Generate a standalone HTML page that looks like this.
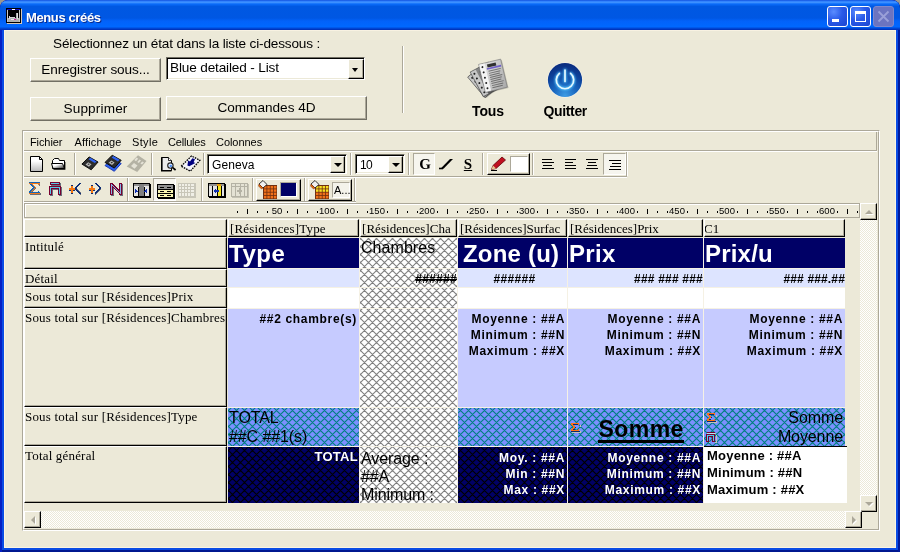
<!DOCTYPE html>
<html>
<head>
<meta charset="utf-8">
<title>Menus créés</title>
<style>
*{box-sizing:border-box;margin:0;padding:0}
html,body{width:900px;height:552px;overflow:hidden;background:#9a9890}
body{font-family:"Liberation Sans",sans-serif;font-size:13px;color:#000;position:relative}
.a{position:absolute}
#win{position:absolute;left:0;top:0;width:900px;height:552px;background:#0a4ce4;overflow:hidden;border-radius:8px 8px 0 0;box-shadow:inset 2px 0 0 #0420c4,inset -2px 0 0 #001a9c,inset 0 -2px 0 #001890}
#title{position:absolute;left:0;top:0;width:900px;height:30px;
 background:linear-gradient(to bottom,#0a46d6 0px,#2f7efc 1px,#3c90ff 2.5px,#0a6cfa 4px,#0058e2 6.5px,#0057e3 18px,#0262fa 21px,#0068ff 26.5px,#0052e2 28px,#0038c4 29px,#0030b6 30px);
 border-radius:8px 8px 0 0}
#title .cap{position:absolute;left:26px;top:10px;line-height:15px;font-size:13px;font-weight:bold;color:#fff;text-shadow:1px 1px 0 #0a2a8c;letter-spacing:-0.38px;white-space:nowrap}
#client{position:absolute;left:4px;top:30px;width:892px;height:518px;background:#ece9d8;box-shadow:inset 1px 0 0 #fbf4e2,inset -1px 0 0 #fbf4e2,inset 0 -1px 0 #fbf4e2,inset 0 1px 0 #f8f2e2}
#pg{position:absolute;left:0;top:0;width:900px;height:552px;will-change:transform}
#title{will-change:transform}
.btn{position:absolute;background:#ece9d8;border:1px solid;border-color:#fff #716f64 #716f64 #fff;box-shadow:inset -1px -1px 0 #aca899;text-align:center;font-size:13px;white-space:nowrap}
.tb{position:absolute;width:21px;height:21px;border-radius:3px;border:1px solid #fff}
.t{position:absolute;white-space:nowrap}
.ser{font-family:"Liberation Serif",serif}
.mn{font-size:11px;line-height:13px;top:136px}
.rh{position:absolute;left:24px;width:203px;border-right:1px solid #000;border-bottom:1px solid #000;border-top:1px solid #fff;border-left:1px solid #fff;background:#ece9d8;box-shadow:inset -1px -1px 0 #aca899}
.rh span{position:absolute;left:0px;top:2px;font-family:"Liberation Serif",serif;font-size:13px;line-height:14px;letter-spacing:0.18px;white-space:nowrap}
.ch{position:absolute;top:219px;height:18px;border-right:1px solid #000;border-bottom:1px solid #000;border-top:1px solid #fff;border-left:1px solid #fff;background:#ece9d8;box-shadow:inset -1px -1px 0 #aca899;overflow:hidden}
.ch span{position:absolute;left:1px;top:2px;font-family:"Liberation Serif",serif;font-size:13px;line-height:14px;letter-spacing:0.18px;white-space:nowrap}
.c{position:absolute;overflow:hidden}
.b12{font-size:12px;font-weight:bold;line-height:16px;letter-spacing:0.55px;white-space:nowrap}
</style>
</head>
<body>
<div id="win">
<div id="title">
<svg class="a" style="left:6px;top:8px" width="16" height="16" viewBox="0 0 16 16" shape-rendering="crispEdges">
<rect x="0" y="0" width="15" height="15" fill="#000"/>
<rect x="15" y="1" width="1" height="15" fill="#d8c8b8"/><rect x="1" y="15" width="15" height="1" fill="#d8c8b8"/>
<rect x="1" y="1" width="13" height="1" fill="#1010c0"/><rect x="6" y="1" width="3" height="1" fill="#fff"/>
<rect x="1" y="2" width="1" height="12" fill="#c8c8c8"/><rect x="13" y="2" width="1" height="12" fill="#c8c8c8"/>
<rect x="2" y="10" width="11" height="4" fill="#b0b0b0"/>
<rect x="3" y="8" width="1" height="3" fill="#d8d8d8"/><rect x="4" y="9" width="5" height="1" fill="#d8d8d8"/>
<rect x="10" y="5" width="2" height="6" fill="#b0b0b0"/><rect x="11" y="5" width="1" height="6" fill="#e0e0e0"/>
<rect x="5" y="11" width="3" height="1" fill="#e8e8e8"/><rect x="8" y="11" width="2" height="1" fill="#d020a0"/>
</svg>
<div class="cap">Menus créés</div>
<div class="tb" style="left:827px;top:6px;background:radial-gradient(circle at 30% 25%,#5a8cff 0%,#2a5ae8 45%,#1a44d0 100%)"><div class="a" style="left:4px;top:12px;width:7px;height:3px;background:#fff"></div></div>
<div class="tb" style="left:850px;top:6px;background:radial-gradient(circle at 30% 25%,#5a8cff 0%,#2a5ae8 45%,#1a44d0 100%)"><div class="a" style="left:4px;top:4px;width:11px;height:11px;border:1px solid #fff;border-top-width:3px"></div></div>
<div class="tb" style="left:873px;top:6px;background:#6c74c0;border-color:#7f88cc">
<svg class="a" style="left:3px;top:3px" width="13" height="13" viewBox="0 0 13 13"><path d="M1.5 1.5 L11.5 11.5 M11.5 1.5 L1.5 11.5" stroke="#9aa0d8" stroke-width="1.8" fill="none"/></svg>
</div>
</div>
<div id="client"></div>
<div id="pg">
<div class="t" style="left:53px;top:36px;font-size:13.6px;line-height:15px;letter-spacing:-0.17px">Sélectionnez un état dans la liste ci-dessous :</div>
<div class="btn" style="left:30px;top:58px;width:131px;height:24px;line-height:22px;font-size:13.6px;letter-spacing:-0.09px">Enregistrer sous...</div>
<div class="a" style="left:166px;top:57px;width:199px;height:23px;background:#fff;border:1px solid;border-color:#716f64 #fff #fff #716f64;box-shadow:inset 1px 1px 0 #000, inset -1px -1px 0 #ece9d8">
<div class="t" style="left:3px;top:2px;font-size:13.6px;line-height:15px;letter-spacing:-0.15px">Blue detailed - List</div>
<div class="btn" style="right:0px;top:1px;width:16px;height:20px;border-color:#fff #000 #000 #fff;box-shadow:inset -1px -1px 0 #aca899"><div class="a" style="left:3px;top:8px;width:0;height:0;border:3.5px solid transparent;border-top:4px solid #000;border-bottom:0"></div></div>
</div>
<div class="btn" style="left:30px;top:97px;width:131px;height:24px;line-height:22px;font-size:13.6px;letter-spacing:0.15px">Supprimer</div>
<div class="btn" style="left:166px;top:96px;width:201px;height:24px;line-height:22px;font-size:13.6px">Commandes 4D</div>
<div class="a" style="left:402px;top:46px;width:1px;height:67px;background:#aca899"></div>
<div class="a" style="left:403px;top:46px;width:1px;height:67px;background:#fff"></div>
<div class="t" id="tous" style="left:472px;top:103px;font-size:14px;font-weight:bold;line-height:16px;letter-spacing:-0.1px">Tous</div>
<div class="t" id="quit" style="left:543.5px;top:103px;font-size:14px;font-weight:bold;line-height:16px;letter-spacing:-0.35px">Quitter</div>
<svg class="a" style="left:462px;top:53px" width="52" height="52" viewBox="0 0 52 52"><defs><linearGradient id="pg1" x1="0" y1="0" x2="1" y2="1"><stop offset="0" stop-color="#e8e8e8"/><stop offset="1" stop-color="#a8a8a8"/></linearGradient><linearGradient id="pg2" x1="0" y1="0" x2="1" y2="1"><stop offset="0" stop-color="#989898"/><stop offset="1" stop-color="#484848"/></linearGradient></defs><g transform="translate(22,28) rotate(-40)"><rect x="-9.0" y="-12.5" width="20" height="27" fill="#00000030"/><rect x="-10.0" y="-13.5" width="20" height="27" fill="url(#pg2)" stroke="#404040" stroke-width="0.6"/><rect x="-9.5" y="-13.0" width="5.5" height="26" fill="#c8c8c8"/><circle cx="-7.0" cy="-10.0" r="1" fill="#202020"/><circle cx="-7.0" cy="-5.0" r="1" fill="#202020"/><circle cx="-7.0" cy="0.0" r="1" fill="#202020"/><circle cx="-7.0" cy="5.0" r="1" fill="#202020"/><circle cx="-7.0" cy="10.0" r="1" fill="#202020"/><rect x="-2.0" y="-9.5" width="10" height="1.1" fill="#505050" opacity="0.6"/><rect x="-2.0" y="-7.1" width="10" height="1.1" fill="#505050" opacity="0.6"/><rect x="-2.0" y="-4.7" width="10" height="1.1" fill="#505050" opacity="0.6"/><rect x="-2.0" y="-2.3" width="10" height="1.1" fill="#505050" opacity="0.6"/><rect x="-2.0" y="0.1" width="10" height="1.1" fill="#505050" opacity="0.6"/><rect x="-2.0" y="2.5" width="10" height="1.1" fill="#505050" opacity="0.6"/><rect x="-2.0" y="4.9" width="10" height="1.1" fill="#505050" opacity="0.6"/><rect x="-2.0" y="7.3" width="10" height="1.1" fill="#505050" opacity="0.6"/><rect x="-2.0" y="9.7" width="10" height="1.1" fill="#505050" opacity="0.6"/><rect x="-2.0" y="12.1" width="10" height="1.1" fill="#505050" opacity="0.6"/></g><g transform="translate(24,26.5) rotate(-28)"><rect x="-9.5" y="-13.0" width="21" height="28" fill="#00000030"/><rect x="-10.5" y="-14.0" width="21" height="28" fill="url(#pg2)" stroke="#505050" stroke-width="0.6"/><rect x="-10.0" y="-13.5" width="5.5" height="27" fill="#c8c8c8"/><circle cx="-7.5" cy="-10.5" r="1" fill="#202020"/><circle cx="-7.5" cy="-5.2" r="1" fill="#202020"/><circle cx="-7.5" cy="0.0" r="1" fill="#202020"/><circle cx="-7.5" cy="5.2" r="1" fill="#202020"/><circle cx="-7.5" cy="10.5" r="1" fill="#202020"/><rect x="-2.5" y="-10.0" width="11" height="1.1" fill="#505050" opacity="0.6"/><rect x="-2.5" y="-7.6" width="11" height="1.1" fill="#505050" opacity="0.6"/><rect x="-2.5" y="-5.2" width="11" height="1.1" fill="#505050" opacity="0.6"/><rect x="-2.5" y="-2.8" width="11" height="1.1" fill="#505050" opacity="0.6"/><rect x="-2.5" y="-0.4" width="11" height="1.1" fill="#505050" opacity="0.6"/><rect x="-2.5" y="2.0" width="11" height="1.1" fill="#505050" opacity="0.6"/><rect x="-2.5" y="4.4" width="11" height="1.1" fill="#505050" opacity="0.6"/><rect x="-2.5" y="6.8" width="11" height="1.1" fill="#505050" opacity="0.6"/><rect x="-2.5" y="9.2" width="11" height="1.1" fill="#505050" opacity="0.6"/><rect x="-2.5" y="11.6" width="11" height="1.1" fill="#505050" opacity="0.6"/></g><g transform="translate(31,22.8) rotate(-13.5)"><rect x="-10.3" y="-13.4" width="22.6" height="28.8" fill="#00000030"/><rect x="-11.3" y="-14.4" width="22.6" height="28.8" fill="url(#pg1)" stroke="#777" stroke-width="0.6"/><rect x="-10.8" y="-13.9" width="5.5" height="27.8" fill="#f4f4f4"/><circle cx="-8.3" cy="-10.9" r="1" fill="#202020"/><circle cx="-8.3" cy="-5.5" r="1" fill="#202020"/><circle cx="-8.3" cy="0.0" r="1" fill="#202020"/><circle cx="-8.3" cy="5.5" r="1" fill="#202020"/><circle cx="-8.3" cy="10.9" r="1" fill="#202020"/><rect x="-3.3000000000000007" y="-12.4" width="9" height="3.2" fill="#303030"/><rect x="-4.300000000000001" y="-8.8" width="14.600000000000001" height="1.6" fill="#7060c8"/><rect x="-3.3000000000000007" y="-5.9" width="12.600000000000001" height="1" fill="#606060" opacity="0.85"/><rect x="-3.3000000000000007" y="-3.8" width="11.600000000000001" height="1" fill="#606060" opacity="0.85"/><rect x="-3.3000000000000007" y="-1.7" width="10.600000000000001" height="1" fill="#606060" opacity="0.85"/><rect x="-3.3000000000000007" y="0.4" width="12.600000000000001" height="1" fill="#606060" opacity="0.85"/><rect x="-3.3000000000000007" y="2.5" width="11.600000000000001" height="1" fill="#606060" opacity="0.85"/><rect x="-3.3000000000000007" y="4.6" width="10.600000000000001" height="1" fill="#606060" opacity="0.85"/><rect x="-3.3000000000000007" y="6.7" width="12.600000000000001" height="1" fill="#606060" opacity="0.85"/><rect x="-3.3000000000000007" y="8.8" width="11.600000000000001" height="1" fill="#606060" opacity="0.85"/><rect x="-3.3000000000000007" y="10.9" width="10.600000000000001" height="1" fill="#606060" opacity="0.85"/></g></svg>
<svg class="a" style="left:544.9px;top:59.7px" width="40" height="40" viewBox="0 0 40 40"><defs>
<radialGradient id="qg" cx="0.5" cy="0.95" r="0.95"><stop offset="0" stop-color="#3c9ae4"/><stop offset="0.35" stop-color="#1a68c0"/><stop offset="0.7" stop-color="#0d419a"/><stop offset="1" stop-color="#0a2a7c"/></radialGradient>
<filter id="glow" x="-50%" y="-50%" width="200%" height="200%"><feGaussianBlur stdDeviation="1.1"/></filter>
</defs>
<circle cx="20" cy="20" r="17.6" fill="#fff" opacity="0.55"/>
<circle cx="20" cy="20" r="17.1" fill="url(#qg)"/>
<g fill="none" stroke="#58c8ff" stroke-width="3" stroke-linecap="round" filter="url(#glow)" opacity="0.9"><path d="M14.4 13.4 A8.7 8.7 0 1 0 25.6 13.4"/><path d="M20 10 V21"/></g>
<g fill="none" stroke="#e4f8ff" stroke-width="1.7" stroke-linecap="round"><path d="M14.4 13.4 A8.7 8.7 0 1 0 25.6 13.4"/><path d="M20 10 V21.5"/></g></svg>
<div class="a" style="left:22px;top:130px;width:858px;height:401px;border:1px solid #aca899;border-right-color:#fff;border-bottom-color:#fff"></div>
<div class="a" style="left:23px;top:131px;width:856px;height:399px;border:1px solid #fff;border-right-color:#aca899;border-bottom-color:#aca899"></div>
<div class="t mn" style="left:30px;letter-spacing:-0.1px">Fichier</div>
<div class="t mn" style="left:74.5px;letter-spacing:0.15px">Affichage</div>
<div class="t mn" style="left:132px;letter-spacing:0.35px">Style</div>
<div class="t mn" style="left:168px;letter-spacing:-0.2px">Cellules</div>
<div class="t mn" style="left:216px;letter-spacing:-0.05px">Colonnes</div>
<div class="a" style="left:24px;top:150px;width:853px;height:1px;background:#aca899"></div>
<div class="a" style="left:24px;top:151px;width:853px;height:1px;background:#fff"></div>
<div class="a" style="left:876px;top:132px;width:1px;height:18px;background:#aca899"></div>
<div class="a" style="left:24px;top:176px;width:603px;height:1px;background:#aca899"></div>
<div class="a" style="left:24px;top:177px;width:603px;height:1px;background:#fff"></div>
<div class="a" style="left:24px;top:201px;width:332px;height:1px;background:#aca899"></div>
<div class="a" style="left:24px;top:202px;width:332px;height:1px;background:#fff"></div>
<div class="a" style="left:74px;top:153px;width:1px;height:22px;background:#aca899"></div>
<div class="a" style="left:75px;top:153px;width:1px;height:22px;background:#fff"></div>
<div class="a" style="left:151px;top:153px;width:1px;height:22px;background:#aca899"></div>
<div class="a" style="left:152px;top:153px;width:1px;height:22px;background:#fff"></div>
<div class="a" style="left:203px;top:153px;width:1px;height:22px;background:#aca899"></div>
<div class="a" style="left:204px;top:153px;width:1px;height:22px;background:#fff"></div>
<div class="a" style="left:350px;top:153px;width:1px;height:22px;background:#aca899"></div>
<div class="a" style="left:351px;top:153px;width:1px;height:22px;background:#fff"></div>
<div class="a" style="left:408px;top:153px;width:1px;height:22px;background:#aca899"></div>
<div class="a" style="left:409px;top:153px;width:1px;height:22px;background:#fff"></div>
<div class="a" style="left:482px;top:153px;width:1px;height:22px;background:#aca899"></div>
<div class="a" style="left:483px;top:153px;width:1px;height:22px;background:#fff"></div>
<div class="a" style="left:532px;top:153px;width:1px;height:22px;background:#aca899"></div>
<div class="a" style="left:533px;top:153px;width:1px;height:22px;background:#fff"></div>
<div class="a" style="left:626px;top:152px;width:1px;height:24px;background:#aca899"></div>
<div class="a" style="left:627px;top:152px;width:1px;height:24px;background:#fff"></div>
<div class="a" style="left:127px;top:178px;width:1px;height:23px;background:#aca899"></div>
<div class="a" style="left:128px;top:178px;width:1px;height:23px;background:#fff"></div>
<div class="a" style="left:201px;top:178px;width:1px;height:23px;background:#aca899"></div>
<div class="a" style="left:202px;top:178px;width:1px;height:23px;background:#fff"></div>
<div class="a" style="left:252px;top:178px;width:1px;height:23px;background:#aca899"></div>
<div class="a" style="left:253px;top:178px;width:1px;height:23px;background:#fff"></div>
<div class="a" style="left:304px;top:178px;width:1px;height:23px;background:#aca899"></div>
<div class="a" style="left:305px;top:178px;width:1px;height:23px;background:#fff"></div>
<div class="a" style="left:354px;top:178px;width:1px;height:23px;background:#aca899"></div>
<div class="a" style="left:355px;top:178px;width:1px;height:23px;background:#fff"></div>
<svg class="a" style="left:30px;top:156px" width="14" height="16" viewBox="0 0 14 16"><defs><linearGradient id="gd" x1="0" y1="0" x2="0" y2="1"><stop offset="0.3" stop-color="#fff"/><stop offset="1" stop-color="#b8b8b8"/></linearGradient></defs><path d="M0.5 0.5 H9.5 L12.5 3.5 V15.5 H0.5 Z" fill="url(#gd)" stroke="#000"/><path d="M9.5 0.5 V3.5 H12.5" fill="none" stroke="#000"/></svg>
<svg class="a" style="left:50px;top:158px" width="17" height="12" viewBox="0 0 17 12"><path d="M2.5 2.5 L4.5 0.5 H8.5 L9.5 2.5 H14.5 V10.5 H2.5 Z" fill="#fff" stroke="#000"/><defs><linearGradient id="fg" x1="0" y1="0" x2="1" y2="1"><stop offset="0.35" stop-color="#fff"/><stop offset="1" stop-color="#202020"/></linearGradient></defs><path d="M1.5 5.5 H12.5 L14.5 10.5 H3 Z" fill="url(#fg)" stroke="#000"/><path d="M3.5 11.2 H14.8 V4" stroke="#000" stroke-width="1.2" fill="none"/></svg>
<svg class="a" style="left:80px;top:155px" width="20" height="16" viewBox="0 0 20 16"><g transform="translate(1.9,1.9)"><path d="M0 7.2 L7.2 0 L16.2 5.1 L9.3 12.9 Z" fill="#2c2c2c" stroke="#000" stroke-width="0.9" stroke-linejoin="round"/><path d="M6.6 2.4 L8.4 0.9 L14.6 4.5 L12.9 6.2 Z" fill="#2f62f0"/><path d="M3.6 7.6 L6.3 5.4 L9.6 7.4 L7 9.9 Z" fill="#b8b8b8"/><path d="M5.6 7.3 L6.8 6.5 L7.9 7.2 L6.8 8.2Z" fill="#2c2c2c"/></g></svg>
<svg class="a" style="left:103px;top:153px" width="20" height="20" viewBox="0 0 20 20"><g transform="translate(2,5.4)"><path d="M0 7.2 L7.2 0 L16.2 5.1 L9.3 12.9 Z" fill="#2f62f0" stroke="#1030b0" stroke-width="0.9" stroke-linejoin="round"/><path d="M6.6 2.4 L8.4 0.9 L14.6 4.5 L12.9 6.2 Z" fill="#2f62f0"/><path d="M3.6 7.6 L6.3 5.4 L9.6 7.4 L7 9.9 Z" fill="#2f62f0"/><path d="M5.6 7.3 L6.8 6.5 L7.9 7.2 L6.8 8.2Z" fill="#2f62f0"/></g><g transform="translate(2,2.2)"><path d="M0 7.2 L7.2 0 L16.2 5.1 L9.3 12.9 Z" fill="#2c2c2c" stroke="#000" stroke-width="0.9" stroke-linejoin="round"/><path d="M6.6 2.4 L8.4 0.9 L14.6 4.5 L12.9 6.2 Z" fill="#2f62f0"/><path d="M3.6 7.6 L6.3 5.4 L9.6 7.4 L7 9.9 Z" fill="#b8b8b8"/><path d="M5.6 7.3 L6.8 6.5 L7.9 7.2 L6.8 8.2Z" fill="#2c2c2c"/></g></svg>
<svg class="a" style="left:125px;top:153px" width="24" height="21" viewBox="0 0 24 21"><path d="M1.7 13.6 L13 2.2 L21.5 8 L12.2 19 Z" fill="#b4b2a4"/><path d="M11.5 4.5 L13.2 5.7 L11 8.2 L9.3 7z M14.5 6.5 L16 7.6 L13.8 10 L12.3 9z M17.2 8.4 L19 9.6 L17 11.6 L15.4 10.6z M6 13 L9 10 L12.5 12.5 L9.5 15.8z" fill="#e4e2d6"/></svg>
<svg class="a" style="left:160px;top:156px" width="18" height="17" viewBox="0 0 18 17"><path d="M1.5 1.5 H8.5 L11.5 4.5 V14.5 H1.5 Z" fill="#ececec" stroke="#000" stroke-width="1"/><path d="M1.8 1.5 V14.8 H11.5" fill="none" stroke="#000" stroke-width="1.6"/><path d="M8.5 1.5 V4.5 H11.5" fill="#fff" stroke="#000" stroke-width="0.8"/><circle cx="10.4" cy="9.6" r="2.7" fill="#dce8ff" stroke="#202020" stroke-width="1.1"/><circle cx="10.8" cy="9.9" r="1.2" fill="#4a8cf0"/><path d="M12.6 11.6 L15.6 14" stroke="#000" stroke-width="1.8"/></svg>
<svg class="a" style="left:180px;top:155px" width="22" height="18" viewBox="0 0 22 18"><path d="M1.2 11.2 L11.5 1 L19.9 5.3 L10.3 16.2 Z" fill="#f4f4fa" stroke="#000" stroke-width="1.3" stroke-dasharray="1.6 1"/><path d="M15 4.2 L13.6 7.2 L15.4 8 L9.2 11.2 L7.4 10.4 L8.2 5.6 L10 6.4 L12.4 3.2Z" fill="#000080"/></svg>
<div class="a" style="left:207px;top:154px;width:140px;height:20px;background:#fff;border:1px solid;border-color:#716f64 #fff #fff #716f64;box-shadow:inset 1px 1px 0 #000, inset -1px -1px 0 #ece9d8"><div class="t" style="left:4px;top:3px;font-size:12px;line-height:14px;letter-spacing:0.1px">Geneva</div><div class="btn" style="right:1px;top:1px;width:15px;height:17px;border-color:#fff #000 #000 #fff;box-shadow:inset -1px -1px 0 #aca899"><div class="a" style="left:2.5px;top:6px;width:0;height:0;border:4px solid transparent;border-top:4px solid #000;border-bottom:0"></div></div></div>
<div class="a" style="left:355px;top:154px;width:50px;height:20px;background:#fff;border:1px solid;border-color:#716f64 #fff #fff #716f64;box-shadow:inset 1px 1px 0 #000, inset -1px -1px 0 #ece9d8"><div class="t" style="left:4px;top:3px;font-size:12px;line-height:14px;letter-spacing:-0.6px">10</div><div class="btn" style="right:1px;top:1px;width:15px;height:17px;border-color:#fff #000 #000 #fff;box-shadow:inset -1px -1px 0 #aca899"><div class="a" style="left:2.5px;top:6px;width:0;height:0;border:4px solid transparent;border-top:4px solid #000;border-bottom:0"></div></div></div>
<div class="a" style="left:413px;top:153px;width:22px;height:22px;background:#f6f5ee;border:1px solid;border-color:#aca899 #fff #fff #aca899"></div>
<div class="t ser" style="left:414px;top:156px;width:22px;text-align:center;font-size:15px;font-weight:bold;line-height:17px">G</div>
<svg class="a" style="left:438px;top:158px" width="16" height="12" viewBox="0 0 16 12"><path d="M1 10.5 H5" stroke="#000" stroke-width="1.6" fill="none"/><path d="M2.5 10.8 L12 1 L15 1 L5.5 10.8Z" fill="#000"/></svg>
<div class="t ser" style="left:459px;top:156px;width:18px;text-align:center;font-size:15px;font-weight:bold;line-height:17px;text-decoration:underline">S</div>
<div class="btn" style="left:487px;top:153px;width:43px;height:22px;border-color:#fff #000 #000 #fff"></div>
<svg class="a" style="left:490px;top:156px" width="17" height="15" viewBox="0 0 17 15"><path d="M1.5 13.5 L3 9.5 L12 1 L15.5 4 L6 12.5 Z" fill="#c01020" stroke="#600008" stroke-width="0.8"/><path d="M1.5 13.5 L3 9.5 L6 12.5Z" fill="#e8c890"/><path d="M1 14.5 H7" stroke="#000"/></svg>
<div class="a" style="left:510px;top:156px;width:18px;height:16px;background:#fff;border:1px solid;border-color:#aca899 #fff #fff #aca899"></div>
<svg class="a" style="left:542px;top:159px" width="14" height="11" viewBox="0 0 14 11" shape-rendering="crispEdges"><rect x="0" y="0" width="10" height="1" fill="#000"/><rect x="0" y="3" width="12" height="1" fill="#000"/><rect x="1" y="6" width="9" height="1" fill="#000"/><rect x="0" y="9" width="12" height="1" fill="#000"/></svg>
<svg class="a" style="left:565px;top:159px" width="14" height="11" viewBox="0 0 14 11" shape-rendering="crispEdges"><rect x="0" y="0" width="11" height="1" fill="#000"/><rect x="0" y="3" width="8" height="1" fill="#000"/><rect x="0" y="6" width="11" height="1" fill="#000"/><rect x="0" y="9" width="11" height="1" fill="#000"/></svg>
<svg class="a" style="left:586px;top:159px" width="14" height="11" viewBox="0 0 14 11" shape-rendering="crispEdges"><rect x="0" y="0" width="12" height="1" fill="#000"/><rect x="2" y="3" width="8" height="1" fill="#000"/><rect x="1" y="6" width="10" height="1" fill="#000"/><rect x="0" y="9" width="12" height="1" fill="#000"/></svg>
<div class="a" style="left:603px;top:153px;width:23px;height:22px;background:#f6f5ee;border:1px solid;border-color:#aca899 #fff #fff #aca899"></div>
<svg class="a" style="left:609px;top:160px" width="14" height="11" viewBox="0 0 14 11" shape-rendering="crispEdges"><rect x="0" y="0" width="12" height="1" fill="#000"/><rect x="3" y="3" width="9" height="1" fill="#000"/><rect x="1" y="6" width="11" height="1" fill="#000"/><rect x="0" y="9" width="12" height="1" fill="#000"/></svg>
<svg class="a" style="left:29px;top:182px" width="12" height="13" viewBox="0 0 12 13" shape-rendering="crispEdges"><rect x="0" y="0" width="11" height="1" fill="#1464b4"/><rect x="0" y="1" width="11" height="1" fill="#f47814"/><rect x="1" y="2" width="2" height="1" fill="#1464b4"/><rect x="3" y="2" width="1" height="1" fill="#f47814"/><rect x="9" y="2" width="1" height="1" fill="#f47814"/><rect x="10" y="2" width="1" height="1" fill="#6a6e7a"/><rect x="2" y="3" width="2" height="1" fill="#1464b4"/><rect x="4" y="3" width="1" height="1" fill="#f47814"/><rect x="10" y="3" width="1" height="1" fill="#6a6e7a"/><rect x="3" y="4" width="2" height="1" fill="#1464b4"/><rect x="5" y="4" width="1" height="1" fill="#f47814"/><rect x="4" y="5" width="2" height="1" fill="#1464b4"/><rect x="6" y="5" width="1" height="1" fill="#f47814"/><rect x="3" y="6" width="2" height="1" fill="#1464b4"/><rect x="5" y="6" width="1" height="1" fill="#f47814"/><rect x="6" y="6" width="1" height="1" fill="#6a6e7a"/><rect x="2" y="7" width="2" height="1" fill="#1464b4"/><rect x="4" y="7" width="1" height="1" fill="#f47814"/><rect x="5" y="7" width="1" height="1" fill="#6a6e7a"/><rect x="1" y="8" width="2" height="1" fill="#1464b4"/><rect x="3" y="8" width="1" height="1" fill="#f47814"/><rect x="4" y="8" width="1" height="1" fill="#6a6e7a"/><rect x="0" y="9" width="2" height="1" fill="#1464b4"/><rect x="2" y="9" width="1" height="1" fill="#f47814"/><rect x="3" y="9" width="1" height="1" fill="#6a6e7a"/><rect x="9" y="9" width="1" height="1" fill="#1464b4"/><rect x="0" y="10" width="11" height="1" fill="#1464b4"/><rect x="0" y="11" width="11" height="1" fill="#f47814"/><rect x="11" y="11" width="1" height="1" fill="#6a6e7a"/><rect x="1" y="12" width="11" height="1" fill="#6a6e7a"/></svg>
<svg class="a" style="left:49px;top:182px" width="13" height="14" viewBox="0 0 13 14" shape-rendering="crispEdges"><rect x="1" y="0" width="10" height="1" fill="#780030"/><rect x="1" y="1" width="1" height="1" fill="#780030"/><rect x="2" y="1" width="8" height="1" fill="#58c8e8"/><rect x="10" y="1" width="1" height="1" fill="#780030"/><rect x="11" y="1" width="1" height="1" fill="#6a6e7a"/><rect x="1" y="2" width="10" height="1" fill="#780030"/><rect x="11" y="2" width="1" height="1" fill="#6a6e7a"/><rect x="2" y="3" width="10" height="1" fill="#6a6e7a"/><rect x="0" y="4" width="12" height="1" fill="#780030"/><rect x="0" y="5" width="1" height="1" fill="#780030"/><rect x="1" y="5" width="10" height="1" fill="#58c8e8"/><rect x="11" y="5" width="1" height="1" fill="#780030"/><rect x="12" y="5" width="1" height="1" fill="#6a6e7a"/><rect x="0" y="6" width="1" height="1" fill="#780030"/><rect x="1" y="6" width="1" height="1" fill="#58c8e8"/><rect x="2" y="6" width="8" height="1" fill="#780030"/><rect x="10" y="6" width="1" height="1" fill="#58c8e8"/><rect x="11" y="6" width="1" height="1" fill="#780030"/><rect x="12" y="6" width="1" height="1" fill="#6a6e7a"/><rect x="0" y="7" width="1" height="1" fill="#780030"/><rect x="1" y="7" width="1" height="1" fill="#58c8e8"/><rect x="2" y="7" width="1" height="1" fill="#780030"/><rect x="3" y="7" width="6" height="1" fill="#6a6e7a"/><rect x="9" y="7" width="1" height="1" fill="#780030"/><rect x="10" y="7" width="1" height="1" fill="#58c8e8"/><rect x="11" y="7" width="1" height="1" fill="#780030"/><rect x="12" y="7" width="1" height="1" fill="#6a6e7a"/><rect x="0" y="8" width="1" height="1" fill="#780030"/><rect x="1" y="8" width="1" height="1" fill="#58c8e8"/><rect x="2" y="8" width="1" height="1" fill="#780030"/><rect x="3" y="8" width="1" height="1" fill="#6a6e7a"/><rect x="9" y="8" width="1" height="1" fill="#780030"/><rect x="10" y="8" width="1" height="1" fill="#58c8e8"/><rect x="11" y="8" width="1" height="1" fill="#780030"/><rect x="12" y="8" width="1" height="1" fill="#6a6e7a"/><rect x="0" y="9" width="1" height="1" fill="#780030"/><rect x="1" y="9" width="1" height="1" fill="#58c8e8"/><rect x="2" y="9" width="1" height="1" fill="#780030"/><rect x="3" y="9" width="1" height="1" fill="#6a6e7a"/><rect x="9" y="9" width="1" height="1" fill="#780030"/><rect x="10" y="9" width="1" height="1" fill="#58c8e8"/><rect x="11" y="9" width="1" height="1" fill="#780030"/><rect x="12" y="9" width="1" height="1" fill="#6a6e7a"/><rect x="0" y="10" width="1" height="1" fill="#780030"/><rect x="1" y="10" width="1" height="1" fill="#58c8e8"/><rect x="2" y="10" width="1" height="1" fill="#780030"/><rect x="3" y="10" width="1" height="1" fill="#6a6e7a"/><rect x="9" y="10" width="1" height="1" fill="#780030"/><rect x="10" y="10" width="1" height="1" fill="#58c8e8"/><rect x="11" y="10" width="1" height="1" fill="#780030"/><rect x="12" y="10" width="1" height="1" fill="#6a6e7a"/><rect x="0" y="11" width="1" height="1" fill="#780030"/><rect x="1" y="11" width="1" height="1" fill="#58c8e8"/><rect x="2" y="11" width="1" height="1" fill="#780030"/><rect x="3" y="11" width="1" height="1" fill="#6a6e7a"/><rect x="9" y="11" width="1" height="1" fill="#780030"/><rect x="10" y="11" width="1" height="1" fill="#58c8e8"/><rect x="11" y="11" width="1" height="1" fill="#780030"/><rect x="12" y="11" width="1" height="1" fill="#6a6e7a"/><rect x="0" y="12" width="3" height="1" fill="#780030"/><rect x="3" y="12" width="1" height="1" fill="#6a6e7a"/><rect x="9" y="12" width="3" height="1" fill="#780030"/><rect x="12" y="12" width="1" height="1" fill="#6a6e7a"/><rect x="1" y="13" width="3" height="1" fill="#6a6e7a"/><rect x="10" y="13" width="3" height="1" fill="#6a6e7a"/></svg>
<svg class="a" style="left:69px;top:183px" width="12" height="12" viewBox="0 0 12 12" shape-rendering="crispEdges"><rect x="10" y="0" width="2" height="1" fill="#0c2c74"/><rect x="9" y="1" width="2" height="1" fill="#0c2c74"/><rect x="2" y="2" width="2" height="1" fill="#0c2c74"/><rect x="8" y="2" width="2" height="1" fill="#0c2c74"/><rect x="2" y="3" width="2" height="1" fill="#f47814"/><rect x="7" y="3" width="2" height="1" fill="#0c2c74"/><rect x="2" y="4" width="2" height="1" fill="#f47814"/><rect x="6" y="4" width="2" height="1" fill="#0c2c74"/><rect x="0" y="5" width="6" height="1" fill="#f47814"/><rect x="6" y="5" width="2" height="1" fill="#0c2c74"/><rect x="0" y="6" width="6" height="1" fill="#f47814"/><rect x="6" y="6" width="2" height="1" fill="#0c2c74"/><rect x="8" y="6" width="1" height="1" fill="#6a6e7a"/><rect x="0" y="7" width="2" height="1" fill="#0c2c74"/><rect x="2" y="7" width="2" height="1" fill="#f47814"/><rect x="4" y="7" width="2" height="1" fill="#0c2c74"/><rect x="7" y="7" width="2" height="1" fill="#0c2c74"/><rect x="9" y="7" width="1" height="1" fill="#6a6e7a"/><rect x="2" y="8" width="2" height="1" fill="#f47814"/><rect x="8" y="8" width="2" height="1" fill="#0c2c74"/><rect x="10" y="8" width="1" height="1" fill="#6a6e7a"/><rect x="2" y="9" width="2" height="1" fill="#f47814"/><rect x="9" y="9" width="2" height="1" fill="#0c2c74"/><rect x="11" y="9" width="1" height="1" fill="#6a6e7a"/><rect x="2" y="10" width="2" height="1" fill="#0c2c74"/><rect x="10" y="10" width="2" height="1" fill="#0c2c74"/><rect x="11" y="11" width="1" height="1" fill="#6a6e7a"/></svg>
<svg class="a" style="left:89px;top:183px" width="12" height="12" viewBox="0 0 12 12" shape-rendering="crispEdges"><rect x="6" y="0" width="2" height="1" fill="#0c2c74"/><rect x="7" y="1" width="2" height="1" fill="#0c2c74"/><rect x="2" y="2" width="2" height="1" fill="#0c2c74"/><rect x="8" y="2" width="2" height="1" fill="#0c2c74"/><rect x="2" y="3" width="2" height="1" fill="#f47814"/><rect x="9" y="3" width="2" height="1" fill="#0c2c74"/><rect x="2" y="4" width="2" height="1" fill="#f47814"/><rect x="10" y="4" width="2" height="1" fill="#0c2c74"/><rect x="0" y="5" width="6" height="1" fill="#f47814"/><rect x="10" y="5" width="2" height="1" fill="#0c2c74"/><rect x="0" y="6" width="6" height="1" fill="#f47814"/><rect x="9" y="6" width="2" height="1" fill="#0c2c74"/><rect x="11" y="6" width="1" height="1" fill="#6a6e7a"/><rect x="0" y="7" width="2" height="1" fill="#0c2c74"/><rect x="2" y="7" width="2" height="1" fill="#f47814"/><rect x="4" y="7" width="2" height="1" fill="#0c2c74"/><rect x="8" y="7" width="2" height="1" fill="#0c2c74"/><rect x="10" y="7" width="1" height="1" fill="#6a6e7a"/><rect x="2" y="8" width="2" height="1" fill="#f47814"/><rect x="7" y="8" width="2" height="1" fill="#0c2c74"/><rect x="9" y="8" width="1" height="1" fill="#6a6e7a"/><rect x="2" y="9" width="2" height="1" fill="#f47814"/><rect x="6" y="9" width="2" height="1" fill="#0c2c74"/><rect x="8" y="9" width="1" height="1" fill="#6a6e7a"/><rect x="2" y="10" width="2" height="1" fill="#0c2c74"/><rect x="6" y="10" width="1" height="1" fill="#0c2c74"/><rect x="7" y="10" width="1" height="1" fill="#6a6e7a"/><rect x="6" y="11" width="1" height="1" fill="#6a6e7a"/></svg>
<svg class="a" style="left:110px;top:183px" width="13" height="13" viewBox="0 0 13 13" shape-rendering="crispEdges"><rect x="0" y="0" width="3" height="1" fill="#780030"/><rect x="9" y="0" width="3" height="1" fill="#780030"/><rect x="0" y="1" width="1" height="1" fill="#780030"/><rect x="1" y="1" width="1" height="1" fill="#88b4e4"/><rect x="2" y="1" width="2" height="1" fill="#780030"/><rect x="9" y="1" width="1" height="1" fill="#780030"/><rect x="10" y="1" width="1" height="1" fill="#88b4e4"/><rect x="11" y="1" width="1" height="1" fill="#780030"/><rect x="12" y="1" width="1" height="1" fill="#6a6e7a"/><rect x="0" y="2" width="1" height="1" fill="#780030"/><rect x="1" y="2" width="2" height="1" fill="#88b4e4"/><rect x="3" y="2" width="2" height="1" fill="#780030"/><rect x="9" y="2" width="1" height="1" fill="#780030"/><rect x="10" y="2" width="1" height="1" fill="#88b4e4"/><rect x="11" y="2" width="1" height="1" fill="#780030"/><rect x="12" y="2" width="1" height="1" fill="#6a6e7a"/><rect x="0" y="3" width="1" height="1" fill="#780030"/><rect x="1" y="3" width="1" height="1" fill="#88b4e4"/><rect x="2" y="3" width="1" height="1" fill="#780030"/><rect x="3" y="3" width="1" height="1" fill="#88b4e4"/><rect x="4" y="3" width="2" height="1" fill="#780030"/><rect x="9" y="3" width="1" height="1" fill="#780030"/><rect x="10" y="3" width="1" height="1" fill="#88b4e4"/><rect x="11" y="3" width="1" height="1" fill="#780030"/><rect x="12" y="3" width="1" height="1" fill="#6a6e7a"/><rect x="0" y="4" width="1" height="1" fill="#780030"/><rect x="1" y="4" width="1" height="1" fill="#88b4e4"/><rect x="2" y="4" width="2" height="1" fill="#780030"/><rect x="4" y="4" width="1" height="1" fill="#88b4e4"/><rect x="5" y="4" width="2" height="1" fill="#780030"/><rect x="9" y="4" width="1" height="1" fill="#780030"/><rect x="10" y="4" width="1" height="1" fill="#88b4e4"/><rect x="11" y="4" width="1" height="1" fill="#780030"/><rect x="12" y="4" width="1" height="1" fill="#6a6e7a"/><rect x="0" y="5" width="1" height="1" fill="#780030"/><rect x="1" y="5" width="1" height="1" fill="#88b4e4"/><rect x="2" y="5" width="1" height="1" fill="#780030"/><rect x="3" y="5" width="1" height="1" fill="#6a6e7a"/><rect x="4" y="5" width="1" height="1" fill="#780030"/><rect x="5" y="5" width="1" height="1" fill="#88b4e4"/><rect x="6" y="5" width="2" height="1" fill="#780030"/><rect x="9" y="5" width="1" height="1" fill="#780030"/><rect x="10" y="5" width="1" height="1" fill="#88b4e4"/><rect x="11" y="5" width="1" height="1" fill="#780030"/><rect x="12" y="5" width="1" height="1" fill="#6a6e7a"/><rect x="0" y="6" width="1" height="1" fill="#780030"/><rect x="1" y="6" width="1" height="1" fill="#88b4e4"/><rect x="2" y="6" width="1" height="1" fill="#780030"/><rect x="3" y="6" width="1" height="1" fill="#6a6e7a"/><rect x="5" y="6" width="1" height="1" fill="#780030"/><rect x="6" y="6" width="1" height="1" fill="#88b4e4"/><rect x="7" y="6" width="3" height="1" fill="#780030"/><rect x="10" y="6" width="1" height="1" fill="#88b4e4"/><rect x="11" y="6" width="1" height="1" fill="#780030"/><rect x="12" y="6" width="1" height="1" fill="#6a6e7a"/><rect x="0" y="7" width="1" height="1" fill="#780030"/><rect x="1" y="7" width="1" height="1" fill="#88b4e4"/><rect x="2" y="7" width="1" height="1" fill="#780030"/><rect x="3" y="7" width="1" height="1" fill="#6a6e7a"/><rect x="6" y="7" width="1" height="1" fill="#780030"/><rect x="7" y="7" width="1" height="1" fill="#88b4e4"/><rect x="8" y="7" width="2" height="1" fill="#780030"/><rect x="10" y="7" width="1" height="1" fill="#88b4e4"/><rect x="11" y="7" width="1" height="1" fill="#780030"/><rect x="12" y="7" width="1" height="1" fill="#6a6e7a"/><rect x="0" y="8" width="1" height="1" fill="#780030"/><rect x="1" y="8" width="1" height="1" fill="#88b4e4"/><rect x="2" y="8" width="1" height="1" fill="#780030"/><rect x="3" y="8" width="1" height="1" fill="#6a6e7a"/><rect x="7" y="8" width="1" height="1" fill="#780030"/><rect x="8" y="8" width="1" height="1" fill="#88b4e4"/><rect x="9" y="8" width="1" height="1" fill="#780030"/><rect x="10" y="8" width="1" height="1" fill="#88b4e4"/><rect x="11" y="8" width="1" height="1" fill="#780030"/><rect x="12" y="8" width="1" height="1" fill="#6a6e7a"/><rect x="0" y="9" width="1" height="1" fill="#780030"/><rect x="1" y="9" width="1" height="1" fill="#88b4e4"/><rect x="2" y="9" width="1" height="1" fill="#780030"/><rect x="3" y="9" width="1" height="1" fill="#6a6e7a"/><rect x="8" y="9" width="1" height="1" fill="#780030"/><rect x="9" y="9" width="2" height="1" fill="#88b4e4"/><rect x="11" y="9" width="1" height="1" fill="#780030"/><rect x="12" y="9" width="1" height="1" fill="#6a6e7a"/><rect x="0" y="10" width="1" height="1" fill="#780030"/><rect x="1" y="10" width="1" height="1" fill="#88b4e4"/><rect x="2" y="10" width="1" height="1" fill="#780030"/><rect x="3" y="10" width="1" height="1" fill="#6a6e7a"/><rect x="9" y="10" width="1" height="1" fill="#780030"/><rect x="10" y="10" width="1" height="1" fill="#88b4e4"/><rect x="11" y="10" width="1" height="1" fill="#780030"/><rect x="12" y="10" width="1" height="1" fill="#6a6e7a"/><rect x="0" y="11" width="3" height="1" fill="#780030"/><rect x="3" y="11" width="1" height="1" fill="#6a6e7a"/><rect x="9" y="11" width="3" height="1" fill="#780030"/><rect x="12" y="11" width="1" height="1" fill="#6a6e7a"/><rect x="1" y="12" width="3" height="1" fill="#6a6e7a"/><rect x="10" y="12" width="3" height="1" fill="#6a6e7a"/></svg>
<svg class="a" style="left:133px;top:183px" width="19" height="16" viewBox="0 0 19 16" shape-rendering="crispEdges"><rect x="1" y="1" width="17" height="14" fill="#000"/><rect x="0.5" y="0.5" width="16" height="13" fill="#e4e4e4" stroke="#000"/><rect x="1" y="1" width="15" height="2" fill="#909090"/><rect x="6" y="1" width="5" height="12" fill="#808080"/><path d="M5 4 V13 M11 4 V13" stroke="#000"/><path d="M2 6 L5 8 L2 10Z M14 6 L11 8 L14 10Z" fill="#1030b0"/><path d="M2 8 H5 M11 8 H14" stroke="#1030b0"/></svg>
<div class="a" style="left:153px;top:178px;width:23px;height:23px;background:#f6f5ee;border:1px solid;border-color:#aca899 #fff #fff #aca899"></div>
<svg class="a" style="left:157px;top:184px" width="19" height="16" viewBox="0 0 19 16" shape-rendering="crispEdges"><rect x="1" y="1" width="17" height="14" fill="#000"/><rect x="0.5" y="0.5" width="16" height="13" fill="#e4e4e4" stroke="#000"/><rect x="1" y="1" width="15" height="4" fill="#909090"/><rect x="1" y="5" width="15" height="8" fill="#f8f4b0"/><path d="M1 5 H16 M1 9 H16" stroke="#000"/><path d="M3 3 H7 M10 3 H14 M3 7 H7 M10 7 H14 M3 11 H7 M10 11 H14" stroke="#000" stroke-width="1"/></svg>
<svg class="a" style="left:178px;top:183px" width="19" height="16" viewBox="0 0 19 16" shape-rendering="crispEdges"><rect x="0" y="0" width="18" height="15" fill="#c8c6b8"/><rect x="1" y="1" width="15" height="12" fill="#f0efe6"/><path d="M1 3.5 H16 M1 6.5 H16 M1 9.5 H16 M3.5 1 V13 M6.5 1 V13 M9.5 1 V13 M12.5 1 V13" stroke="#c8c6b8"/></svg>
<svg class="a" style="left:208px;top:183px" width="19" height="16" viewBox="0 0 19 16" shape-rendering="crispEdges"><rect x="1" y="1" width="17" height="14" fill="#000"/><rect x="0.5" y="0.5" width="16" height="13" fill="#e4e4e4" stroke="#000"/><rect x="1" y="1" width="15" height="2" fill="#909090"/><rect x="9" y="1" width="4" height="2" fill="#e8a010"/><rect x="9" y="3" width="4" height="10" fill="#f8e820"/><path d="M4 3 V13 M9 3 V13 M13 3 V13" stroke="#000"/><path d="M5 8 L8 5 V7 H11 V9 H8 V11Z" fill="#1030b0"/></svg>
<svg class="a" style="left:231px;top:183px" width="19" height="16" viewBox="0 0 19 16" shape-rendering="crispEdges"><rect x="1" y="1" width="17" height="14" fill="#c4c2b4"/><rect x="0.5" y="0.5" width="16" height="13" fill="#e4e2d4" stroke="#b4b2a4"/><path d="M4 1 V13 M9 1 V13 M13 1 V13 M1 3.5 H16" stroke="#b4b2a4"/><path d="M11 8 L8 5 V7 H6 V9 H8 V11Z" fill="#b4b2a4"/></svg>
<div class="btn" style="left:256px;top:179px;width:45px;height:22px;border-color:#fff #000 #000 #fff"></div>
<svg class="a" style="left:258px;top:180px" width="20" height="20" viewBox="0 0 20 20"><rect x="5" y="5" width="14" height="14" fill="#703010"/><rect x="6.0" y="6.0" width="2.5" height="2.5" fill="#f07018"/><rect x="9.3" y="6.0" width="2.5" height="2.5" fill="#f07018"/><rect x="12.6" y="6.0" width="2.5" height="2.5" fill="#f07018"/><rect x="15.9" y="6.0" width="2.5" height="2.5" fill="#f07018"/><rect x="6.0" y="9.3" width="2.5" height="2.5" fill="#f07018"/><rect x="9.3" y="9.3" width="2.5" height="2.5" fill="#f07018"/><rect x="12.6" y="9.3" width="2.5" height="2.5" fill="#f07018"/><rect x="15.9" y="9.3" width="2.5" height="2.5" fill="#f07018"/><rect x="6.0" y="12.6" width="2.5" height="2.5" fill="#f07018"/><rect x="9.3" y="12.6" width="2.5" height="2.5" fill="#f07018"/><rect x="12.6" y="12.6" width="2.5" height="2.5" fill="#f07018"/><rect x="15.9" y="12.6" width="2.5" height="2.5" fill="#f07018"/><rect x="6.0" y="15.9" width="2.5" height="2.5" fill="#f07018"/><rect x="9.3" y="15.9" width="2.5" height="2.5" fill="#f07018"/><rect x="12.6" y="15.9" width="2.5" height="2.5" fill="#f07018"/><rect x="15.9" y="15.9" width="2.5" height="2.5" fill="#f07018"/><path d="M1 4 L5 0.5 L9 4.5 L5 8 Z" fill="#f0f0f0" stroke="#000" stroke-width="0.8"/><path d="M1 4 L5 8 L3.5 9 L0.5 6Z" fill="#e86a10" stroke="#703010" stroke-width="0.5"/></svg>
<div class="a" style="left:280px;top:182px;width:17px;height:15px;background:#000066;border:1px solid;border-color:#aca899 #fff #fff #aca899"></div>
<div class="btn" style="left:308px;top:179px;width:44px;height:22px;border-color:#fff #000 #000 #fff"></div>
<svg class="a" style="left:310px;top:180px" width="20" height="20" viewBox="0 0 20 20"><rect x="5" y="5" width="14" height="14" fill="#703010"/><rect x="6.0" y="6.0" width="2.5" height="2.5" fill="#f8e020"/><rect x="9.3" y="6.0" width="2.5" height="2.5" fill="#f8e020"/><rect x="12.6" y="6.0" width="2.5" height="2.5" fill="#f8e020"/><rect x="15.9" y="6.0" width="2.5" height="2.5" fill="#f8e020"/><rect x="6.0" y="9.3" width="2.5" height="2.5" fill="#f8e020"/><rect x="9.3" y="9.3" width="2.5" height="2.5" fill="#f8e020"/><rect x="12.6" y="9.3" width="2.5" height="2.5" fill="#f8e020"/><rect x="15.9" y="9.3" width="2.5" height="2.5" fill="#f8e020"/><rect x="6.0" y="12.6" width="2.5" height="2.5" fill="#f07018"/><rect x="9.3" y="12.6" width="2.5" height="2.5" fill="#f07018"/><rect x="12.6" y="12.6" width="2.5" height="2.5" fill="#f07018"/><rect x="15.9" y="12.6" width="2.5" height="2.5" fill="#f07018"/><rect x="6.0" y="15.9" width="2.5" height="2.5" fill="#f07018"/><rect x="9.3" y="15.9" width="2.5" height="2.5" fill="#f07018"/><rect x="12.6" y="15.9" width="2.5" height="2.5" fill="#f07018"/><rect x="15.9" y="15.9" width="2.5" height="2.5" fill="#f07018"/><path d="M1 4 L5 0.5 L9 4.5 L5 8 Z" fill="#f0f0f0" stroke="#000" stroke-width="0.8"/><path d="M1 4 L5 8 L3.5 9 L0.5 6Z" fill="#e86a10" stroke="#703010" stroke-width="0.5"/></svg>
<div class="a" style="left:332px;top:182px;width:18px;height:16px;background:#f4f3ea;border:1px solid;border-color:#aca899 #fff #fff #aca899"><div class="t" style="left:1px;top:1px;font-size:11px;line-height:13px">A...</div></div>
<div class="a" style="left:24px;top:203px;width:836px;height:15px;border:1px solid #aca899;box-shadow:inset 1px 1px 0 #fff"></div>
<div class="a" style="left:237px;top:211px;width:1px;height:2px;background:#000"></div>
<div class="a" style="left:247px;top:209px;width:1px;height:5px;background:#000"></div>
<div class="a" style="left:257px;top:211px;width:1px;height:2px;background:#000"></div>
<div class="a" style="left:267px;top:211px;width:1px;height:2px;background:#000"></div>
<div class="t" style="left:262.0px;top:205px;width:30px;text-align:center;font-size:9.5px;line-height:12px">50</div>
<div class="a" style="left:287px;top:211px;width:1px;height:2px;background:#000"></div>
<div class="a" style="left:297px;top:209px;width:1px;height:5px;background:#000"></div>
<div class="a" style="left:307px;top:211px;width:1px;height:2px;background:#000"></div>
<div class="a" style="left:317px;top:211px;width:1px;height:2px;background:#000"></div>
<div class="t" style="left:312.0px;top:205px;width:30px;text-align:center;font-size:9.5px;line-height:12px">100</div>
<div class="a" style="left:337px;top:211px;width:1px;height:2px;background:#000"></div>
<div class="a" style="left:347px;top:209px;width:1px;height:5px;background:#000"></div>
<div class="a" style="left:357px;top:211px;width:1px;height:2px;background:#000"></div>
<div class="a" style="left:367px;top:211px;width:1px;height:2px;background:#000"></div>
<div class="t" style="left:362.0px;top:205px;width:30px;text-align:center;font-size:9.5px;line-height:12px">150</div>
<div class="a" style="left:387px;top:211px;width:1px;height:2px;background:#000"></div>
<div class="a" style="left:397px;top:209px;width:1px;height:5px;background:#000"></div>
<div class="a" style="left:407px;top:211px;width:1px;height:2px;background:#000"></div>
<div class="a" style="left:417px;top:211px;width:1px;height:2px;background:#000"></div>
<div class="t" style="left:412.0px;top:205px;width:30px;text-align:center;font-size:9.5px;line-height:12px">200</div>
<div class="a" style="left:437px;top:211px;width:1px;height:2px;background:#000"></div>
<div class="a" style="left:447px;top:209px;width:1px;height:5px;background:#000"></div>
<div class="a" style="left:457px;top:211px;width:1px;height:2px;background:#000"></div>
<div class="a" style="left:467px;top:211px;width:1px;height:2px;background:#000"></div>
<div class="t" style="left:462.0px;top:205px;width:30px;text-align:center;font-size:9.5px;line-height:12px">250</div>
<div class="a" style="left:487px;top:211px;width:1px;height:2px;background:#000"></div>
<div class="a" style="left:497px;top:209px;width:1px;height:5px;background:#000"></div>
<div class="a" style="left:507px;top:211px;width:1px;height:2px;background:#000"></div>
<div class="a" style="left:517px;top:211px;width:1px;height:2px;background:#000"></div>
<div class="t" style="left:512.0px;top:205px;width:30px;text-align:center;font-size:9.5px;line-height:12px">300</div>
<div class="a" style="left:537px;top:211px;width:1px;height:2px;background:#000"></div>
<div class="a" style="left:547px;top:209px;width:1px;height:5px;background:#000"></div>
<div class="a" style="left:557px;top:211px;width:1px;height:2px;background:#000"></div>
<div class="a" style="left:567px;top:211px;width:1px;height:2px;background:#000"></div>
<div class="t" style="left:562.0px;top:205px;width:30px;text-align:center;font-size:9.5px;line-height:12px">350</div>
<div class="a" style="left:587px;top:211px;width:1px;height:2px;background:#000"></div>
<div class="a" style="left:597px;top:209px;width:1px;height:5px;background:#000"></div>
<div class="a" style="left:607px;top:211px;width:1px;height:2px;background:#000"></div>
<div class="a" style="left:617px;top:211px;width:1px;height:2px;background:#000"></div>
<div class="t" style="left:612.0px;top:205px;width:30px;text-align:center;font-size:9.5px;line-height:12px">400</div>
<div class="a" style="left:637px;top:211px;width:1px;height:2px;background:#000"></div>
<div class="a" style="left:647px;top:209px;width:1px;height:5px;background:#000"></div>
<div class="a" style="left:657px;top:211px;width:1px;height:2px;background:#000"></div>
<div class="a" style="left:667px;top:211px;width:1px;height:2px;background:#000"></div>
<div class="t" style="left:662.0px;top:205px;width:30px;text-align:center;font-size:9.5px;line-height:12px">450</div>
<div class="a" style="left:687px;top:211px;width:1px;height:2px;background:#000"></div>
<div class="a" style="left:697px;top:209px;width:1px;height:5px;background:#000"></div>
<div class="a" style="left:707px;top:211px;width:1px;height:2px;background:#000"></div>
<div class="a" style="left:717px;top:211px;width:1px;height:2px;background:#000"></div>
<div class="t" style="left:712.0px;top:205px;width:30px;text-align:center;font-size:9.5px;line-height:12px">500</div>
<div class="a" style="left:737px;top:211px;width:1px;height:2px;background:#000"></div>
<div class="a" style="left:747px;top:209px;width:1px;height:5px;background:#000"></div>
<div class="a" style="left:757px;top:211px;width:1px;height:2px;background:#000"></div>
<div class="a" style="left:767px;top:211px;width:1px;height:2px;background:#000"></div>
<div class="t" style="left:762.0px;top:205px;width:30px;text-align:center;font-size:9.5px;line-height:12px">550</div>
<div class="a" style="left:787px;top:211px;width:1px;height:2px;background:#000"></div>
<div class="a" style="left:797px;top:209px;width:1px;height:5px;background:#000"></div>
<div class="a" style="left:807px;top:211px;width:1px;height:2px;background:#000"></div>
<div class="a" style="left:817px;top:211px;width:1px;height:2px;background:#000"></div>
<div class="t" style="left:812.0px;top:205px;width:30px;text-align:center;font-size:9.5px;line-height:12px">600</div>
<div class="a" style="left:837px;top:211px;width:1px;height:2px;background:#000"></div>
<div class="a" style="left:847px;top:209px;width:1px;height:5px;background:#000"></div>
<div class="a" style="left:857px;top:211px;width:1px;height:2px;background:#000"></div>
<div class="a" style="left:228px;top:238px;width:617px;height:265px;background:#f5f1e4"></div>
<div class="c" style="left:228px;top:238px;width:131px;height:30px;background:#000066;"><div class="t" style="font-size:24px;font-weight:bold;color:#fff;line-height:28px;left:1px;top:2px;letter-spacing:0.5px">Type</div></div>
<div class="c" style="left:360px;top:238px;width:97px;height:30px;background:#fff;"><svg class="a" style="left:0;top:0" width="97" height="30" viewBox="0 0 97 30"><path d="M-1.5 -97.5L99.5 3.5M-1.5 -89.5L99.5 11.5M-1.5 -81.5L99.5 19.5M-1.5 -73.5L99.5 27.5M-1.5 -65.5L99.5 35.5M-1.5 -57.5L99.5 43.5M-1.5 -49.5L99.5 51.5M-1.5 -41.5L99.5 59.5M-1.5 -33.5L99.5 67.5M-1.5 -25.5L99.5 75.5M-1.5 -17.5L99.5 83.5M-1.5 -9.5L99.5 91.5M-1.5 -1.5L99.5 99.5M-1.5 6.5L99.5 107.5M-1.5 14.5L99.5 115.5M-1.5 22.5L99.5 123.5M-1.5 30.5L99.5 131.5M-1.5 2.5L99.5 -98.5M-1.5 10.5L99.5 -90.5M-1.5 18.5L99.5 -82.5M-1.5 26.5L99.5 -74.5M-1.5 34.5L99.5 -66.5M-1.5 42.5L99.5 -58.5M-1.5 50.5L99.5 -50.5M-1.5 58.5L99.5 -42.5M-1.5 66.5L99.5 -34.5M-1.5 74.5L99.5 -26.5M-1.5 82.5L99.5 -18.5M-1.5 90.5L99.5 -10.5M-1.5 98.5L99.5 -2.5M-1.5 106.5L99.5 5.5M-1.5 114.5L99.5 13.5M-1.5 122.5L99.5 21.5M-1.5 130.5L99.5 29.5" stroke="#808080" stroke-width="1.1" fill="none"/></svg><div class="t" style="left:1px;top:0px;font-size:16px;line-height:20px;letter-spacing:0.05px">Chambres</div></div>
<div class="c" style="left:458px;top:238px;width:109px;height:30px;background:#000066;"><div class="t" style="font-size:24px;font-weight:bold;color:#fff;line-height:28px;left:5px;top:2px;letter-spacing:0.2px">Zone (u)</div></div>
<div class="c" style="left:568px;top:238px;width:135px;height:30px;background:#000066;"><div class="t" style="font-size:24px;font-weight:bold;color:#fff;line-height:28px;left:1px;top:2px;letter-spacing:0.3px">Prix</div></div>
<div class="c" style="left:704px;top:238px;width:141px;height:30px;background:#000066;"><div class="t" style="font-size:24px;font-weight:bold;color:#fff;line-height:28px;left:1px;top:2px;letter-spacing:0.2px">Prix/u</div></div>
<div class="c" style="left:228px;top:269px;width:131px;height:18px;background:#dde4ff;"></div>
<div class="c" style="left:360px;top:269px;width:97px;height:18px;background:#fff;"><svg class="a" style="left:0;top:0" width="97" height="18" viewBox="0 0 97 18"><path d="M-1.5 -96.5L99.5 4.5M-1.5 -88.5L99.5 12.5M-1.5 -80.5L99.5 20.5M-1.5 -72.5L99.5 28.5M-1.5 -64.5L99.5 36.5M-1.5 -56.5L99.5 44.5M-1.5 -48.5L99.5 52.5M-1.5 -40.5L99.5 60.5M-1.5 -32.5L99.5 68.5M-1.5 -24.5L99.5 76.5M-1.5 -16.5L99.5 84.5M-1.5 -8.5L99.5 92.5M-1.5 -0.5L99.5 100.5M-1.5 7.5L99.5 108.5M-1.5 15.5L99.5 116.5M-1.5 3.5L99.5 -97.5M-1.5 11.5L99.5 -89.5M-1.5 19.5L99.5 -81.5M-1.5 27.5L99.5 -73.5M-1.5 35.5L99.5 -65.5M-1.5 43.5L99.5 -57.5M-1.5 51.5L99.5 -49.5M-1.5 59.5L99.5 -41.5M-1.5 67.5L99.5 -33.5M-1.5 75.5L99.5 -25.5M-1.5 83.5L99.5 -17.5M-1.5 91.5L99.5 -9.5M-1.5 99.5L99.5 -1.5M-1.5 107.5L99.5 6.5M-1.5 115.5L99.5 14.5" stroke="#808080" stroke-width="1.1" fill="none"/></svg><div class="t" style="font-size:12px;font-weight:bold;line-height:16px;letter-spacing:0.68px;right:0px;top:2px;text-decoration:line-through;letter-spacing:0.3px">######</div></div>
<div class="c" style="left:458px;top:269px;width:109px;height:18px;background:#dde4ff;"><div class="t" style="font-size:12px;font-weight:bold;line-height:16px;letter-spacing:0.68px;left:2.5px;width:108px;text-align:center;top:2px;letter-spacing:0.3px">######</div></div>
<div class="c" style="left:568px;top:269px;width:135px;height:18px;background:#dde4ff;"><div class="t" style="font-size:12px;font-weight:bold;line-height:16px;letter-spacing:0.68px;right:0px;top:2px;letter-spacing:0.2px">### ### ###</div></div>
<div class="c" style="left:704px;top:269px;width:141px;height:18px;background:#dde4ff;"><div class="t" style="font-size:12px;font-weight:bold;line-height:16px;letter-spacing:0.68px;right:0px;top:2px;letter-spacing:0.15px">### ###.##</div></div>
<div class="c" style="left:228px;top:288px;width:131px;height:20px;background:#fff;"></div>
<div class="c" style="left:360px;top:288px;width:97px;height:20px;background:#fff;"><svg class="a" style="left:0;top:0" width="97" height="20" viewBox="0 0 97 20"><path d="M-1.5 -99.5L99.5 1.5M-1.5 -91.5L99.5 9.5M-1.5 -83.5L99.5 17.5M-1.5 -75.5L99.5 25.5M-1.5 -67.5L99.5 33.5M-1.5 -59.5L99.5 41.5M-1.5 -51.5L99.5 49.5M-1.5 -43.5L99.5 57.5M-1.5 -35.5L99.5 65.5M-1.5 -27.5L99.5 73.5M-1.5 -19.5L99.5 81.5M-1.5 -11.5L99.5 89.5M-1.5 -3.5L99.5 97.5M-1.5 4.5L99.5 105.5M-1.5 12.5L99.5 113.5M-1.5 20.5L99.5 121.5M-1.5 0.5L99.5 -100.5M-1.5 8.5L99.5 -92.5M-1.5 16.5L99.5 -84.5M-1.5 24.5L99.5 -76.5M-1.5 32.5L99.5 -68.5M-1.5 40.5L99.5 -60.5M-1.5 48.5L99.5 -52.5M-1.5 56.5L99.5 -44.5M-1.5 64.5L99.5 -36.5M-1.5 72.5L99.5 -28.5M-1.5 80.5L99.5 -20.5M-1.5 88.5L99.5 -12.5M-1.5 96.5L99.5 -4.5M-1.5 104.5L99.5 3.5M-1.5 112.5L99.5 11.5M-1.5 120.5L99.5 19.5" stroke="#808080" stroke-width="1.1" fill="none"/></svg></div>
<div class="c" style="left:458px;top:288px;width:109px;height:20px;background:#fff;"></div>
<div class="c" style="left:568px;top:288px;width:135px;height:20px;background:#fff;"></div>
<div class="c" style="left:704px;top:288px;width:141px;height:20px;background:#fff;"></div>
<div class="c" style="left:228px;top:309px;width:131px;height:98px;background:#c6cbff;"><div class="t" style="font-size:12px;font-weight:bold;line-height:16px;letter-spacing:0.68px;right:2px;top:2px">##2 chambre(s)</div></div>
<div class="c" style="left:360px;top:309px;width:97px;height:98px;background:#fff;"><svg class="a" style="left:0;top:0" width="97" height="98" viewBox="0 0 97 98"><path d="M-1.5 -96.5L99.5 4.5M-1.5 -88.5L99.5 12.5M-1.5 -80.5L99.5 20.5M-1.5 -72.5L99.5 28.5M-1.5 -64.5L99.5 36.5M-1.5 -56.5L99.5 44.5M-1.5 -48.5L99.5 52.5M-1.5 -40.5L99.5 60.5M-1.5 -32.5L99.5 68.5M-1.5 -24.5L99.5 76.5M-1.5 -16.5L99.5 84.5M-1.5 -8.5L99.5 92.5M-1.5 -0.5L99.5 100.5M-1.5 7.5L99.5 108.5M-1.5 15.5L99.5 116.5M-1.5 23.5L99.5 124.5M-1.5 31.5L99.5 132.5M-1.5 39.5L99.5 140.5M-1.5 47.5L99.5 148.5M-1.5 55.5L99.5 156.5M-1.5 63.5L99.5 164.5M-1.5 71.5L99.5 172.5M-1.5 79.5L99.5 180.5M-1.5 87.5L99.5 188.5M-1.5 95.5L99.5 196.5M-1.5 3.5L99.5 -97.5M-1.5 11.5L99.5 -89.5M-1.5 19.5L99.5 -81.5M-1.5 27.5L99.5 -73.5M-1.5 35.5L99.5 -65.5M-1.5 43.5L99.5 -57.5M-1.5 51.5L99.5 -49.5M-1.5 59.5L99.5 -41.5M-1.5 67.5L99.5 -33.5M-1.5 75.5L99.5 -25.5M-1.5 83.5L99.5 -17.5M-1.5 91.5L99.5 -9.5M-1.5 99.5L99.5 -1.5M-1.5 107.5L99.5 6.5M-1.5 115.5L99.5 14.5M-1.5 123.5L99.5 22.5M-1.5 131.5L99.5 30.5M-1.5 139.5L99.5 38.5M-1.5 147.5L99.5 46.5M-1.5 155.5L99.5 54.5M-1.5 163.5L99.5 62.5M-1.5 171.5L99.5 70.5M-1.5 179.5L99.5 78.5M-1.5 187.5L99.5 86.5M-1.5 195.5L99.5 94.5" stroke="#808080" stroke-width="1.1" fill="none"/></svg></div>
<div class="c" style="left:458px;top:309px;width:109px;height:98px;background:#c6cbff;"><div class="t" style="font-size:12px;font-weight:bold;line-height:16px;letter-spacing:0.68px;color:#000;right:2px;text-align:right;top:2px">Moyenne : ##A</div><div class="t" style="font-size:12px;font-weight:bold;line-height:16px;letter-spacing:0.68px;color:#000;right:2px;text-align:right;top:18px">Minimum : ##N</div><div class="t" style="font-size:12px;font-weight:bold;line-height:16px;letter-spacing:0.68px;color:#000;right:2px;text-align:right;top:34px">Maximum : ##X</div></div>
<div class="c" style="left:568px;top:309px;width:135px;height:98px;background:#c6cbff;"><div class="t" style="font-size:12px;font-weight:bold;line-height:16px;letter-spacing:0.68px;color:#000;right:2px;text-align:right;top:2px">Moyenne : ##A</div><div class="t" style="font-size:12px;font-weight:bold;line-height:16px;letter-spacing:0.68px;color:#000;right:2px;text-align:right;top:18px">Minimum : ##N</div><div class="t" style="font-size:12px;font-weight:bold;line-height:16px;letter-spacing:0.68px;color:#000;right:2px;text-align:right;top:34px">Maximum : ##X</div></div>
<div class="c" style="left:704px;top:309px;width:141px;height:98px;background:#c6cbff;"><div class="t" style="font-size:12px;font-weight:bold;line-height:16px;letter-spacing:0.68px;color:#000;right:2px;text-align:right;top:2px">Moyenne : ##A</div><div class="t" style="font-size:12px;font-weight:bold;line-height:16px;letter-spacing:0.68px;color:#000;right:2px;text-align:right;top:18px">Minimum : ##N</div><div class="t" style="font-size:12px;font-weight:bold;line-height:16px;letter-spacing:0.68px;color:#000;right:2px;text-align:right;top:34px">Maximum : ##X</div></div>
<div class="c" style="left:228px;top:408px;width:131px;height:38px;background:#7b90ff;"><svg class="a" style="left:0;top:0" width="131" height="38" viewBox="0 0 131 38"><path d="M-1.5 -135.5L133.5 -0.5M-1.5 -127.5L133.5 7.5M-1.5 -119.5L133.5 15.5M-1.5 -111.5L133.5 23.5M-1.5 -103.5L133.5 31.5M-1.5 -95.5L133.5 39.5M-1.5 -87.5L133.5 47.5M-1.5 -79.5L133.5 55.5M-1.5 -71.5L133.5 63.5M-1.5 -63.5L133.5 71.5M-1.5 -55.5L133.5 79.5M-1.5 -47.5L133.5 87.5M-1.5 -39.5L133.5 95.5M-1.5 -31.5L133.5 103.5M-1.5 -23.5L133.5 111.5M-1.5 -15.5L133.5 119.5M-1.5 -7.5L133.5 127.5M-1.5 0.5L133.5 135.5M-1.5 8.5L133.5 143.5M-1.5 16.5L133.5 151.5M-1.5 24.5L133.5 159.5M-1.5 32.5L133.5 167.5M-1.5 40.5L133.5 175.5M-1.5 4.5L133.5 -130.5M-1.5 12.5L133.5 -122.5M-1.5 20.5L133.5 -114.5M-1.5 28.5L133.5 -106.5M-1.5 36.5L133.5 -98.5M-1.5 44.5L133.5 -90.5M-1.5 52.5L133.5 -82.5M-1.5 60.5L133.5 -74.5M-1.5 68.5L133.5 -66.5M-1.5 76.5L133.5 -58.5M-1.5 84.5L133.5 -50.5M-1.5 92.5L133.5 -42.5M-1.5 100.5L133.5 -34.5M-1.5 108.5L133.5 -26.5M-1.5 116.5L133.5 -18.5M-1.5 124.5L133.5 -10.5M-1.5 132.5L133.5 -2.5M-1.5 140.5L133.5 5.5M-1.5 148.5L133.5 13.5M-1.5 156.5L133.5 21.5M-1.5 164.5L133.5 29.5M-1.5 172.5L133.5 37.5" stroke="#008080" stroke-width="1.1" fill="none"/></svg><div class="t" style="font-size:16px;line-height:19px;letter-spacing:-0.1px;left:1px;top:0px">TOTAL</div><div class="t" style="font-size:16px;line-height:19px;letter-spacing:-0.1px;left:1px;top:19px">##C ##1(s)</div></div>
<div class="c" style="left:360px;top:408px;width:97px;height:38px;background:#fff;"><svg class="a" style="left:0;top:0" width="97" height="38" viewBox="0 0 97 38"><path d="M-1.5 -99.5L99.5 1.5M-1.5 -91.5L99.5 9.5M-1.5 -83.5L99.5 17.5M-1.5 -75.5L99.5 25.5M-1.5 -67.5L99.5 33.5M-1.5 -59.5L99.5 41.5M-1.5 -51.5L99.5 49.5M-1.5 -43.5L99.5 57.5M-1.5 -35.5L99.5 65.5M-1.5 -27.5L99.5 73.5M-1.5 -19.5L99.5 81.5M-1.5 -11.5L99.5 89.5M-1.5 -3.5L99.5 97.5M-1.5 4.5L99.5 105.5M-1.5 12.5L99.5 113.5M-1.5 20.5L99.5 121.5M-1.5 28.5L99.5 129.5M-1.5 36.5L99.5 137.5M-1.5 0.5L99.5 -100.5M-1.5 8.5L99.5 -92.5M-1.5 16.5L99.5 -84.5M-1.5 24.5L99.5 -76.5M-1.5 32.5L99.5 -68.5M-1.5 40.5L99.5 -60.5M-1.5 48.5L99.5 -52.5M-1.5 56.5L99.5 -44.5M-1.5 64.5L99.5 -36.5M-1.5 72.5L99.5 -28.5M-1.5 80.5L99.5 -20.5M-1.5 88.5L99.5 -12.5M-1.5 96.5L99.5 -4.5M-1.5 104.5L99.5 3.5M-1.5 112.5L99.5 11.5M-1.5 120.5L99.5 19.5M-1.5 128.5L99.5 27.5M-1.5 136.5L99.5 35.5" stroke="#808080" stroke-width="1.1" fill="none"/></svg></div>
<div class="c" style="left:458px;top:408px;width:109px;height:38px;background:#7b90ff;"><svg class="a" style="left:0;top:0" width="109" height="38" viewBox="0 0 109 38"><path d="M-1.5 -113.5L111.5 -0.5M-1.5 -105.5L111.5 7.5M-1.5 -97.5L111.5 15.5M-1.5 -89.5L111.5 23.5M-1.5 -81.5L111.5 31.5M-1.5 -73.5L111.5 39.5M-1.5 -65.5L111.5 47.5M-1.5 -57.5L111.5 55.5M-1.5 -49.5L111.5 63.5M-1.5 -41.5L111.5 71.5M-1.5 -33.5L111.5 79.5M-1.5 -25.5L111.5 87.5M-1.5 -17.5L111.5 95.5M-1.5 -9.5L111.5 103.5M-1.5 -1.5L111.5 111.5M-1.5 6.5L111.5 119.5M-1.5 14.5L111.5 127.5M-1.5 22.5L111.5 135.5M-1.5 30.5L111.5 143.5M-1.5 38.5L111.5 151.5M-1.5 -1.5L111.5 -114.5M-1.5 6.5L111.5 -106.5M-1.5 14.5L111.5 -98.5M-1.5 22.5L111.5 -90.5M-1.5 30.5L111.5 -82.5M-1.5 38.5L111.5 -74.5M-1.5 46.5L111.5 -66.5M-1.5 54.5L111.5 -58.5M-1.5 62.5L111.5 -50.5M-1.5 70.5L111.5 -42.5M-1.5 78.5L111.5 -34.5M-1.5 86.5L111.5 -26.5M-1.5 94.5L111.5 -18.5M-1.5 102.5L111.5 -10.5M-1.5 110.5L111.5 -2.5M-1.5 118.5L111.5 5.5M-1.5 126.5L111.5 13.5M-1.5 134.5L111.5 21.5M-1.5 142.5L111.5 29.5M-1.5 150.5L111.5 37.5" stroke="#008080" stroke-width="1.1" fill="none"/></svg></div>
<div class="c" style="left:568px;top:408px;width:135px;height:38px;background:#7b90ff;"><svg class="a" style="left:0;top:0" width="135" height="38" viewBox="0 0 135 38"><path d="M-1.5 -139.5L137.5 -0.5M-1.5 -131.5L137.5 7.5M-1.5 -123.5L137.5 15.5M-1.5 -115.5L137.5 23.5M-1.5 -107.5L137.5 31.5M-1.5 -99.5L137.5 39.5M-1.5 -91.5L137.5 47.5M-1.5 -83.5L137.5 55.5M-1.5 -75.5L137.5 63.5M-1.5 -67.5L137.5 71.5M-1.5 -59.5L137.5 79.5M-1.5 -51.5L137.5 87.5M-1.5 -43.5L137.5 95.5M-1.5 -35.5L137.5 103.5M-1.5 -27.5L137.5 111.5M-1.5 -19.5L137.5 119.5M-1.5 -11.5L137.5 127.5M-1.5 -3.5L137.5 135.5M-1.5 4.5L137.5 143.5M-1.5 12.5L137.5 151.5M-1.5 20.5L137.5 159.5M-1.5 28.5L137.5 167.5M-1.5 36.5L137.5 175.5M-1.5 0.5L137.5 -138.5M-1.5 8.5L137.5 -130.5M-1.5 16.5L137.5 -122.5M-1.5 24.5L137.5 -114.5M-1.5 32.5L137.5 -106.5M-1.5 40.5L137.5 -98.5M-1.5 48.5L137.5 -90.5M-1.5 56.5L137.5 -82.5M-1.5 64.5L137.5 -74.5M-1.5 72.5L137.5 -66.5M-1.5 80.5L137.5 -58.5M-1.5 88.5L137.5 -50.5M-1.5 96.5L137.5 -42.5M-1.5 104.5L137.5 -34.5M-1.5 112.5L137.5 -26.5M-1.5 120.5L137.5 -18.5M-1.5 128.5L137.5 -10.5M-1.5 136.5L137.5 -2.5M-1.5 144.5L137.5 5.5M-1.5 152.5L137.5 13.5M-1.5 160.5L137.5 21.5M-1.5 168.5L137.5 29.5M-1.5 176.5L137.5 37.5" stroke="#008080" stroke-width="1.1" fill="none"/></svg><div class="t" style="left:30.5px;top:7px;font-size:23px;font-weight:bold;line-height:28px;letter-spacing:0.45px">Somme</div><div class="a" style="left:30px;top:32px;width:86px;height:3px;background:#000"></div><svg class="a" style="left:2px;top:15px" width="12" height="11" viewBox="0 0 12 11" shape-rendering="crispEdges"><g fill="#c4c2b4"><rect x="2" y="9" width="9" height="1"/><rect x="10" y="2" width="1" height="2"/><rect x="10" y="8" width="1" height="2"/></g><g fill="#0a2a70"><rect x="1" y="1" width="8" height="1"/><rect x="2" y="2" width="2" height="1"/><rect x="3" y="3" width="2" height="1"/><rect x="4" y="4" width="2" height="1"/><rect x="3" y="6" width="2" height="1"/><rect x="1" y="8" width="9" height="1"/></g><g fill="#ff7010"><rect x="1" y="0" width="8" height="1"/><rect x="1" y="1" width="2" height="1"/><rect x="8" y="1" width="1" height="1"/><rect x="2" y="2" width="2" height="1"/><rect x="3" y="3" width="2" height="1"/><rect x="3" y="4" width="2" height="1"/><rect x="2" y="5" width="2" height="1"/><rect x="1" y="6" width="2" height="1"/><rect x="1" y="7" width="8" height="1"/><rect x="8" y="6" width="1" height="1"/></g></svg></div>
<div class="c" style="left:704px;top:408px;width:141px;height:38px;background:#7b90ff;"><svg class="a" style="left:0;top:0" width="141" height="38" viewBox="0 0 141 38"><path d="M-1.5 -139.5L143.5 5.5M-1.5 -131.5L143.5 13.5M-1.5 -123.5L143.5 21.5M-1.5 -115.5L143.5 29.5M-1.5 -107.5L143.5 37.5M-1.5 -99.5L143.5 45.5M-1.5 -91.5L143.5 53.5M-1.5 -83.5L143.5 61.5M-1.5 -75.5L143.5 69.5M-1.5 -67.5L143.5 77.5M-1.5 -59.5L143.5 85.5M-1.5 -51.5L143.5 93.5M-1.5 -43.5L143.5 101.5M-1.5 -35.5L143.5 109.5M-1.5 -27.5L143.5 117.5M-1.5 -19.5L143.5 125.5M-1.5 -11.5L143.5 133.5M-1.5 -3.5L143.5 141.5M-1.5 4.5L143.5 149.5M-1.5 12.5L143.5 157.5M-1.5 20.5L143.5 165.5M-1.5 28.5L143.5 173.5M-1.5 36.5L143.5 181.5M-1.5 0.5L143.5 -144.5M-1.5 8.5L143.5 -136.5M-1.5 16.5L143.5 -128.5M-1.5 24.5L143.5 -120.5M-1.5 32.5L143.5 -112.5M-1.5 40.5L143.5 -104.5M-1.5 48.5L143.5 -96.5M-1.5 56.5L143.5 -88.5M-1.5 64.5L143.5 -80.5M-1.5 72.5L143.5 -72.5M-1.5 80.5L143.5 -64.5M-1.5 88.5L143.5 -56.5M-1.5 96.5L143.5 -48.5M-1.5 104.5L143.5 -40.5M-1.5 112.5L143.5 -32.5M-1.5 120.5L143.5 -24.5M-1.5 128.5L143.5 -16.5M-1.5 136.5L143.5 -8.5M-1.5 144.5L143.5 -0.5M-1.5 152.5L143.5 7.5M-1.5 160.5L143.5 15.5M-1.5 168.5L143.5 23.5M-1.5 176.5L143.5 31.5M-1.5 184.5L143.5 39.5" stroke="#008080" stroke-width="1.1" fill="none"/></svg><div class="t" style="font-size:16px;line-height:19px;letter-spacing:-0.1px;right:2px;top:0px">Somme</div><div class="t" style="font-size:16px;line-height:19px;letter-spacing:-0.1px;right:2px;top:19px">Moyenne</div><svg class="a" style="left:2px;top:5px" width="12" height="11" viewBox="0 0 12 11" shape-rendering="crispEdges"><g fill="#c4c2b4"><rect x="2" y="9" width="9" height="1"/><rect x="10" y="2" width="1" height="2"/><rect x="10" y="8" width="1" height="2"/></g><g fill="#0a2a70"><rect x="1" y="1" width="8" height="1"/><rect x="2" y="2" width="2" height="1"/><rect x="3" y="3" width="2" height="1"/><rect x="4" y="4" width="2" height="1"/><rect x="3" y="6" width="2" height="1"/><rect x="1" y="8" width="9" height="1"/></g><g fill="#ff7010"><rect x="1" y="0" width="8" height="1"/><rect x="1" y="1" width="2" height="1"/><rect x="8" y="1" width="1" height="1"/><rect x="2" y="2" width="2" height="1"/><rect x="3" y="3" width="2" height="1"/><rect x="3" y="4" width="2" height="1"/><rect x="2" y="5" width="2" height="1"/><rect x="1" y="6" width="2" height="1"/><rect x="1" y="7" width="8" height="1"/><rect x="8" y="6" width="1" height="1"/></g></svg><svg class="a" style="left:2px;top:24px" width="12" height="12" viewBox="0 0 12 12" shape-rendering="crispEdges"><rect x="10" y="3" width="1" height="8" fill="#c4c2b4"/><rect x="3" y="10" width="1" height="1" fill="#c4c2b4"/><rect x="9" y="10" width="1" height="1" fill="#c4c2b4"/><rect x="9" y="1" width="1" height="1" fill="#c4c2b4"/><rect x="1" y="0" width="8" height="1" fill="#7a0030"/><rect x="1" y="1" width="8" height="1" fill="#b8e8f4"/><rect x="0" y="2" width="9" height="1" fill="#7a0030"/><rect x="0" y="3" width="1" height="7" fill="#7a0030"/><rect x="1" y="3" width="7" height="1" fill="#48d0f0"/><rect x="8" y="3" width="1" height="7" fill="#7a0030"/><rect x="1" y="4" width="1" height="5" fill="#48d0f0"/><rect x="2" y="4" width="1" height="6" fill="#7a0030"/><rect x="3" y="4" width="3" height="1" fill="#7a0030"/><rect x="7" y="4" width="1" height="5" fill="#48d0f0"/><rect x="6" y="4" width="1" height="6" fill="#7a0030"/><rect x="0" y="9" width="3" height="1" fill="#7a0030"/><rect x="6" y="9" width="3" height="1" fill="#7a0030"/></svg></div>
<div class="c" style="left:228px;top:447px;width:131px;height:56px;background:#000066;"><svg class="a" style="left:0;top:0" width="131" height="56" viewBox="0 0 131 56"><path d="M-1.5 -134.5L133.5 0.5M-1.5 -126.5L133.5 8.5M-1.5 -118.5L133.5 16.5M-1.5 -110.5L133.5 24.5M-1.5 -102.5L133.5 32.5M-1.5 -94.5L133.5 40.5M-1.5 -86.5L133.5 48.5M-1.5 -78.5L133.5 56.5M-1.5 -70.5L133.5 64.5M-1.5 -62.5L133.5 72.5M-1.5 -54.5L133.5 80.5M-1.5 -46.5L133.5 88.5M-1.5 -38.5L133.5 96.5M-1.5 -30.5L133.5 104.5M-1.5 -22.5L133.5 112.5M-1.5 -14.5L133.5 120.5M-1.5 -6.5L133.5 128.5M-1.5 1.5L133.5 136.5M-1.5 9.5L133.5 144.5M-1.5 17.5L133.5 152.5M-1.5 25.5L133.5 160.5M-1.5 33.5L133.5 168.5M-1.5 41.5L133.5 176.5M-1.5 49.5L133.5 184.5M-1.5 57.5L133.5 192.5M-1.5 5.5L133.5 -129.5M-1.5 13.5L133.5 -121.5M-1.5 21.5L133.5 -113.5M-1.5 29.5L133.5 -105.5M-1.5 37.5L133.5 -97.5M-1.5 45.5L133.5 -89.5M-1.5 53.5L133.5 -81.5M-1.5 61.5L133.5 -73.5M-1.5 69.5L133.5 -65.5M-1.5 77.5L133.5 -57.5M-1.5 85.5L133.5 -49.5M-1.5 93.5L133.5 -41.5M-1.5 101.5L133.5 -33.5M-1.5 109.5L133.5 -25.5M-1.5 117.5L133.5 -17.5M-1.5 125.5L133.5 -9.5M-1.5 133.5L133.5 -1.5M-1.5 141.5L133.5 6.5M-1.5 149.5L133.5 14.5M-1.5 157.5L133.5 22.5M-1.5 165.5L133.5 30.5M-1.5 173.5L133.5 38.5M-1.5 181.5L133.5 46.5M-1.5 189.5L133.5 54.5" stroke="#000000" stroke-width="1.1" fill="none"/></svg><div class="t" style="right:1px;top:2px;font-size:13px;font-weight:bold;color:#fff;line-height:16px;letter-spacing:0.3px">TOTAL</div></div>
<div class="c" style="left:360px;top:447px;width:97px;height:56px;background:#fff;"><svg class="a" style="left:0;top:0" width="97" height="56" viewBox="0 0 97 56"><path d="M-1.5 -98.5L99.5 2.5M-1.5 -90.5L99.5 10.5M-1.5 -82.5L99.5 18.5M-1.5 -74.5L99.5 26.5M-1.5 -66.5L99.5 34.5M-1.5 -58.5L99.5 42.5M-1.5 -50.5L99.5 50.5M-1.5 -42.5L99.5 58.5M-1.5 -34.5L99.5 66.5M-1.5 -26.5L99.5 74.5M-1.5 -18.5L99.5 82.5M-1.5 -10.5L99.5 90.5M-1.5 -2.5L99.5 98.5M-1.5 5.5L99.5 106.5M-1.5 13.5L99.5 114.5M-1.5 21.5L99.5 122.5M-1.5 29.5L99.5 130.5M-1.5 37.5L99.5 138.5M-1.5 45.5L99.5 146.5M-1.5 53.5L99.5 154.5M-1.5 1.5L99.5 -99.5M-1.5 9.5L99.5 -91.5M-1.5 17.5L99.5 -83.5M-1.5 25.5L99.5 -75.5M-1.5 33.5L99.5 -67.5M-1.5 41.5L99.5 -59.5M-1.5 49.5L99.5 -51.5M-1.5 57.5L99.5 -43.5M-1.5 65.5L99.5 -35.5M-1.5 73.5L99.5 -27.5M-1.5 81.5L99.5 -19.5M-1.5 89.5L99.5 -11.5M-1.5 97.5L99.5 -3.5M-1.5 105.5L99.5 4.5M-1.5 113.5L99.5 12.5M-1.5 121.5L99.5 20.5M-1.5 129.5L99.5 28.5M-1.5 137.5L99.5 36.5M-1.5 145.5L99.5 44.5M-1.5 153.5L99.5 52.5" stroke="#808080" stroke-width="1.1" fill="none"/></svg><div class="t" style="font-size:16px;line-height:19px;letter-spacing:-0.1px;left:1px;top:2px">Average :</div><div class="t" style="font-size:16px;line-height:19px;letter-spacing:-0.1px;left:1px;top:20px">##A</div><div class="t" style="font-size:16px;line-height:19px;letter-spacing:-0.1px;left:1px;top:38px">Minimum :</div></div>
<div class="c" style="left:458px;top:447px;width:109px;height:56px;background:#000066;"><svg class="a" style="left:0;top:0" width="109" height="56" viewBox="0 0 109 56"><path d="M-1.5 -112.5L111.5 0.5M-1.5 -104.5L111.5 8.5M-1.5 -96.5L111.5 16.5M-1.5 -88.5L111.5 24.5M-1.5 -80.5L111.5 32.5M-1.5 -72.5L111.5 40.5M-1.5 -64.5L111.5 48.5M-1.5 -56.5L111.5 56.5M-1.5 -48.5L111.5 64.5M-1.5 -40.5L111.5 72.5M-1.5 -32.5L111.5 80.5M-1.5 -24.5L111.5 88.5M-1.5 -16.5L111.5 96.5M-1.5 -8.5L111.5 104.5M-1.5 -0.5L111.5 112.5M-1.5 7.5L111.5 120.5M-1.5 15.5L111.5 128.5M-1.5 23.5L111.5 136.5M-1.5 31.5L111.5 144.5M-1.5 39.5L111.5 152.5M-1.5 47.5L111.5 160.5M-1.5 55.5L111.5 168.5M-1.5 -0.5L111.5 -113.5M-1.5 7.5L111.5 -105.5M-1.5 15.5L111.5 -97.5M-1.5 23.5L111.5 -89.5M-1.5 31.5L111.5 -81.5M-1.5 39.5L111.5 -73.5M-1.5 47.5L111.5 -65.5M-1.5 55.5L111.5 -57.5M-1.5 63.5L111.5 -49.5M-1.5 71.5L111.5 -41.5M-1.5 79.5L111.5 -33.5M-1.5 87.5L111.5 -25.5M-1.5 95.5L111.5 -17.5M-1.5 103.5L111.5 -9.5M-1.5 111.5L111.5 -1.5M-1.5 119.5L111.5 6.5M-1.5 127.5L111.5 14.5M-1.5 135.5L111.5 22.5M-1.5 143.5L111.5 30.5M-1.5 151.5L111.5 38.5M-1.5 159.5L111.5 46.5M-1.5 167.5L111.5 54.5" stroke="#000000" stroke-width="1.1" fill="none"/></svg><div class="t" style="font-size:12px;font-weight:bold;line-height:16px;letter-spacing:0.68px;color:#fff;right:2px;text-align:right;top:3px">Moy. : ##A</div><div class="t" style="font-size:12px;font-weight:bold;line-height:16px;letter-spacing:0.68px;color:#fff;right:2px;text-align:right;top:19px">Min : ##N</div><div class="t" style="font-size:12px;font-weight:bold;line-height:16px;letter-spacing:0.68px;color:#fff;right:2px;text-align:right;top:35px">Max : ##X</div></div>
<div class="c" style="left:568px;top:447px;width:135px;height:56px;background:#000066;"><svg class="a" style="left:0;top:0" width="135" height="56" viewBox="0 0 135 56"><path d="M-1.5 -138.5L137.5 0.5M-1.5 -130.5L137.5 8.5M-1.5 -122.5L137.5 16.5M-1.5 -114.5L137.5 24.5M-1.5 -106.5L137.5 32.5M-1.5 -98.5L137.5 40.5M-1.5 -90.5L137.5 48.5M-1.5 -82.5L137.5 56.5M-1.5 -74.5L137.5 64.5M-1.5 -66.5L137.5 72.5M-1.5 -58.5L137.5 80.5M-1.5 -50.5L137.5 88.5M-1.5 -42.5L137.5 96.5M-1.5 -34.5L137.5 104.5M-1.5 -26.5L137.5 112.5M-1.5 -18.5L137.5 120.5M-1.5 -10.5L137.5 128.5M-1.5 -2.5L137.5 136.5M-1.5 5.5L137.5 144.5M-1.5 13.5L137.5 152.5M-1.5 21.5L137.5 160.5M-1.5 29.5L137.5 168.5M-1.5 37.5L137.5 176.5M-1.5 45.5L137.5 184.5M-1.5 53.5L137.5 192.5M-1.5 1.5L137.5 -137.5M-1.5 9.5L137.5 -129.5M-1.5 17.5L137.5 -121.5M-1.5 25.5L137.5 -113.5M-1.5 33.5L137.5 -105.5M-1.5 41.5L137.5 -97.5M-1.5 49.5L137.5 -89.5M-1.5 57.5L137.5 -81.5M-1.5 65.5L137.5 -73.5M-1.5 73.5L137.5 -65.5M-1.5 81.5L137.5 -57.5M-1.5 89.5L137.5 -49.5M-1.5 97.5L137.5 -41.5M-1.5 105.5L137.5 -33.5M-1.5 113.5L137.5 -25.5M-1.5 121.5L137.5 -17.5M-1.5 129.5L137.5 -9.5M-1.5 137.5L137.5 -1.5M-1.5 145.5L137.5 6.5M-1.5 153.5L137.5 14.5M-1.5 161.5L137.5 22.5M-1.5 169.5L137.5 30.5M-1.5 177.5L137.5 38.5M-1.5 185.5L137.5 46.5M-1.5 193.5L137.5 54.5" stroke="#000000" stroke-width="1.1" fill="none"/></svg><div class="t" style="font-size:12px;font-weight:bold;line-height:16px;letter-spacing:0.68px;color:#fff;right:2px;text-align:right;top:3px">Moyenne : ##A</div><div class="t" style="font-size:12px;font-weight:bold;line-height:16px;letter-spacing:0.68px;color:#fff;right:2px;text-align:right;top:19px">Minimum : ##N</div><div class="t" style="font-size:12px;font-weight:bold;line-height:16px;letter-spacing:0.68px;color:#fff;right:2px;text-align:right;top:35px">Maximum : ##X</div></div>
<div class="c" style="left:704px;top:446px;width:143px;height:57px;background:#fff;border-top:1px solid #000"><div class="t" style="font-size:13px;font-weight:bold;line-height:17px;letter-spacing:0.22px;left:3px;top:0px">Moyenne : ##A</div><div class="t" style="font-size:13px;font-weight:bold;line-height:17px;letter-spacing:0.22px;left:3px;top:17px">Minimum : ##N</div><div class="t" style="font-size:13px;font-weight:bold;line-height:17px;letter-spacing:0.22px;left:3px;top:34px">Maximum : ##X</div></div>
<div class="ch" style="left:228px;width:131px"><span style="letter-spacing:0.18px;">[Résidences]Type</span></div>
<div class="ch" style="left:360px;width:97px"><span style="letter-spacing:0.05px;">[Résidences]Cha</span></div>
<div class="ch" style="left:458px;width:109px"><span style="letter-spacing:-0.05px;">[Résidences]Surfac</span></div>
<div class="ch" style="left:568px;width:135px"><span style="letter-spacing:0.0px;">[Résidences]Prix</span></div>
<div class="ch" style="left:704px;width:141px"><span style="letter-spacing:0.0px; left:-1px;">C1</span></div>
<div class="rh" style="top:219px;height:18px"></div>
<div class="rh" style="top:237px;height:32px"><span>Intitulé</span></div>
<div class="rh" style="top:269px;height:18px"><span>Détail</span></div>
<div class="rh" style="top:287px;height:21px"><span>Sous total sur [Résidences]Prix</span></div>
<div class="rh" style="top:308px;height:99px"><span>Sous total sur [Résidences]Chambres</span></div>
<div class="rh" style="top:407px;height:39px"><span>Sous total sur [Résidences]Type</span></div>
<div class="rh" style="top:446px;height:57px"><span>Total général</span></div>
<div class="a" style="left:860px;top:220px;width:17px;height:275px;background:conic-gradient(#fff 25%,#ece9d8 0 50%,#fff 0 75%,#ece9d8 0) 0 0/2px 2px"></div>
<div class="a" style="left:41px;top:511px;width:804px;height:17px;background:conic-gradient(#fff 25%,#ece9d8 0 50%,#fff 0 75%,#ece9d8 0) 0 0/2px 2px"></div>
<div class="a" style="left:860px;top:203px;width:17px;height:17px;background:#ece9d8;border:1px solid;border-color:#fff #000 #000 #fff;box-shadow:inset -1px -1px 0 #aca899"><svg class="a" style="left:4px;top:6px" width="10" height="6" viewBox="0 0 10 6"><path d="M0 4 L4 0 L8 4Z" fill="#fff" transform="translate(1,1)"/><path d="M0 4 L4 0 L8 4Z" fill="#aca899"/></svg></div>
<div class="a" style="left:860px;top:495px;width:17px;height:17px;background:#ece9d8;border:1px solid;border-color:#fff #000 #000 #fff;box-shadow:inset -1px -1px 0 #aca899"><svg class="a" style="left:4px;top:6px" width="10" height="6" viewBox="0 0 10 6"><path d="M0 0 L8 0 L4 4Z" fill="#fff" transform="translate(1,1)"/><path d="M0 0 L8 0 L4 4Z" fill="#aca899"/></svg></div>
<div class="a" style="left:24px;top:511px;width:17px;height:17px;background:#ece9d8;border:1px solid;border-color:#fff #000 #000 #fff;box-shadow:inset -1px -1px 0 #aca899"><svg class="a" style="left:6px;top:4px" width="6" height="10" viewBox="0 0 6 10"><path d="M4 0 L4 8 L0 4Z" fill="#fff" transform="translate(1,1)"/><path d="M4 0 L4 8 L0 4Z" fill="#aca899"/></svg></div>
<div class="a" style="left:845px;top:511px;width:17px;height:17px;background:#ece9d8;border:1px solid;border-color:#fff #000 #000 #fff;box-shadow:inset -1px -1px 0 #aca899"><svg class="a" style="left:6px;top:4px" width="6" height="10" viewBox="0 0 6 10"><path d="M0 0 L4 4 L0 8Z" fill="#fff" transform="translate(1,1)"/><path d="M0 0 L4 4 L0 8Z" fill="#aca899"/></svg></div>
</div>
</div>
</body>
</html>
